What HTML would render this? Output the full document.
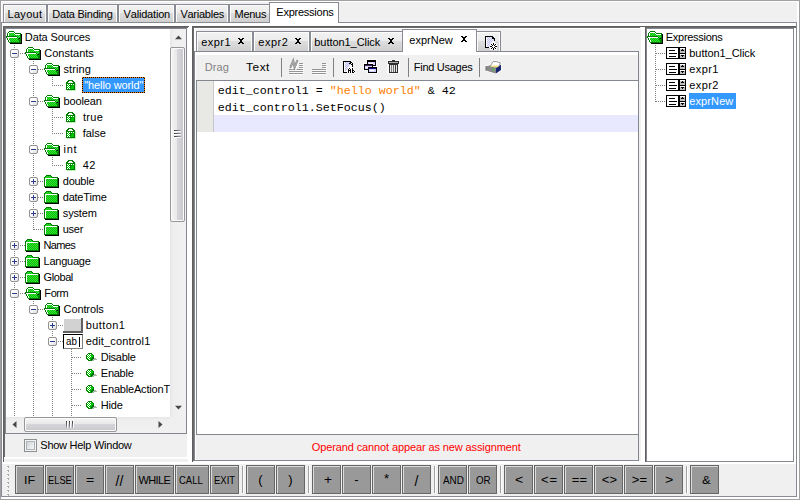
<!DOCTYPE html>
<html><head><meta charset="utf-8"><title>Expressions</title><style>
html,body{margin:0;padding:0}
body{width:800px;height:500px;overflow:hidden;background:#f0f0f0;position:relative;font-family:"Liberation Sans",sans-serif;font-size:11px;color:#000;font-kerning:none}
div{position:absolute;box-sizing:content-box}
.ic{position:absolute;display:block;overflow:visible}
.t{white-space:pre;line-height:13px;height:13px;font-size:11px}
.mono{font-family:"Liberation Mono",monospace;font-size:11.67px;white-space:pre;color:#000}
.bt{position:absolute;left:0;right:0;top:7px;text-align:center;line-height:13px;font-size:11px;white-space:pre}
</style></head><body>
<div style="left:0px;top:0px;width:800px;height:500px;box-sizing:border-box;border:1px solid #a0a0a0;background:#f0f0f0"></div><div style="left:1px;top:1px;width:798px;height:498px;box-sizing:border-box;border:1px solid #fff;border-bottom-width:2px;border-right-width:2px"></div><div style="left:1px;top:22px;width:796px;height:475px;box-sizing:border-box;border:1px solid #898c95;background:#fff"></div><div style="left:3px;top:4px;width:44px;height:18px;box-sizing:border-box;border:1px solid #898c95;border-bottom:0;background:linear-gradient(#f2f2f2 0%,#ebebeb 50%,#dddddd 50%,#cfcfcf 100%);box-shadow:inset 1px 1px 0 #fcfcfc,inset -1px 0 0 #fcfcfc"></div><div class="t" style="left:7.55px;top:8px;letter-spacing:0.294px;">Layout</div><div style="left:47px;top:4px;width:71px;height:18px;box-sizing:border-box;border:1px solid #898c95;border-bottom:0;background:linear-gradient(#f2f2f2 0%,#ebebeb 50%,#dddddd 50%,#cfcfcf 100%);box-shadow:inset 1px 1px 0 #fcfcfc,inset -1px 0 0 #fcfcfc"></div><div class="t" style="left:52.30px;top:8px;letter-spacing:-0.227px;">Data Binding</div><div style="left:118px;top:4px;width:57px;height:18px;box-sizing:border-box;border:1px solid #898c95;border-bottom:0;background:linear-gradient(#f2f2f2 0%,#ebebeb 50%,#dddddd 50%,#cfcfcf 100%);box-shadow:inset 1px 1px 0 #fcfcfc,inset -1px 0 0 #fcfcfc"></div><div class="t" style="left:123.55px;top:8px;letter-spacing:-0.186px;">Validation</div><div style="left:175px;top:4px;width:54px;height:18px;box-sizing:border-box;border:1px solid #898c95;border-bottom:0;background:linear-gradient(#f2f2f2 0%,#ebebeb 50%,#dddddd 50%,#cfcfcf 100%);box-shadow:inset 1px 1px 0 #fcfcfc,inset -1px 0 0 #fcfcfc"></div><div class="t" style="left:180.40px;top:8px;letter-spacing:-0.245px;">Variables</div><div style="left:229px;top:4px;width:42px;height:18px;box-sizing:border-box;border:1px solid #898c95;border-bottom:0;background:linear-gradient(#f2f2f2 0%,#ebebeb 50%,#dddddd 50%,#cfcfcf 100%);box-shadow:inset 1px 1px 0 #fcfcfc,inset -1px 0 0 #fcfcfc"></div><div class="t" style="left:234.55px;top:8px;letter-spacing:-0.295px;">Menus</div><div style="left:269px;top:2px;width:70px;height:21px;box-sizing:border-box;border:1px solid #898c95;border-bottom:0;background:#fff"></div><div class="t" style="left:276.30px;top:6px;letter-spacing:-0.242px;">Expressions</div><div style="left:3px;top:26px;width:186px;height:433px;background:#f0f0f0"></div><div style="left:5px;top:457px;width:184px;height:1px;background:#fff"></div><div style="left:4px;top:458px;width:185px;height:1px;background:#fff"></div><div style="left:187px;top:28px;width:1px;height:431px;background:#fff"></div><div style="left:188px;top:27px;width:1px;height:432px;background:#fff"></div><div style="left:3px;top:26px;width:186px;height:1px;background:#5f5f5f"></div><div style="left:3px;top:27px;width:185px;height:1px;background:#6b6b6b"></div><div style="left:3px;top:26px;width:1px;height:437px;background:#5f5f5f"></div><div style="left:4px;top:27px;width:1px;height:430px;background:#6b6b6b"></div><div style="left:4px;top:459px;width:184px;height:4px;background:#f0f0f0"></div><div style="left:5px;top:28px;width:182px;height:406px;box-sizing:border-box;border:1px solid #828790;background:#fff"></div><div style="left:6px;top:29px;width:164px;height:388px;overflow:hidden"><div style="left:-6px;top:-29px;width:200px;height:500px"><div style="left:14px;top:45px;width:1px;height:249px;background:repeating-linear-gradient(#808080 0,#808080 1px,transparent 1px,transparent 2px)"></div><div style="left:33px;top:61px;width:1px;height:169px;background:repeating-linear-gradient(#808080 0,#808080 1px,transparent 1px,transparent 2px)"></div><div style="left:52px;top:77px;width:1px;height:9px;background:repeating-linear-gradient(#808080 0,#808080 1px,transparent 1px,transparent 2px)"></div><div style="left:52px;top:109px;width:1px;height:25px;background:repeating-linear-gradient(#808080 0,#808080 1px,transparent 1px,transparent 2px)"></div><div style="left:52px;top:157px;width:1px;height:9px;background:repeating-linear-gradient(#808080 0,#808080 1px,transparent 1px,transparent 2px)"></div><div style="left:14px;top:301px;width:1px;height:120px;background:repeating-linear-gradient(#808080 0,#808080 1px,transparent 1px,transparent 2px)"></div><div style="left:33px;top:301px;width:1px;height:9px;background:repeating-linear-gradient(#808080 0,#808080 1px,transparent 1px,transparent 2px)"></div><div style="left:33px;top:317px;width:1px;height:104px;background:repeating-linear-gradient(#808080 0,#808080 1px,transparent 1px,transparent 2px)"></div><div style="left:52px;top:317px;width:1px;height:104px;background:repeating-linear-gradient(#808080 0,#808080 1px,transparent 1px,transparent 2px)"></div><div style="left:71px;top:349px;width:1px;height:72px;background:repeating-linear-gradient(#808080 0,#808080 1px,transparent 1px,transparent 2px)"></div><svg class="ic" style="left:6px;top:31px" width="16" height="13" viewBox="0 0 16 13" shape-rendering="crispEdges"><path fill="#007a00" d="M3 0h5v1h-5zM2 1h1v1h-1zM8 1h1v1h-1zM1 2h1v1h-1zM9 2h6v1h-6zM1 3h1v1h-1zM14 3h1v1h-1zM1 4h1v1h-1zM14 4h1v1h-1zM0 5h11v1h-11zM14 5h1v1h-1zM0 6h1v1h-1zM11 6h1v1h-1zM14 6h1v1h-1zM1 7h1v1h-1zM12 7h1v1h-1zM14 7h1v1h-1zM1 8h1v1h-1zM12 8h1v1h-1zM14 8h1v1h-1zM2 9h1v1h-1zM13 9h2v1h-2zM2 10h1v1h-1zM13 10h2v1h-2zM3 11h12v1h-12z"/><path fill="#ffffff" d="M3 1h5v1h-5zM2 2h1v1h-1zM8 2h1v1h-1zM2 3h1v1h-1zM9 3h5v1h-5zM2 4h1v1h-1zM1 6h10v1h-10zM2 7h1v1h-1zM2 8h1v1h-1zM3 9h1v1h-1zM3 10h1v1h-1z"/><path fill="#00c400" d="M3 2h1v1h-1zM5 2h1v1h-1zM7 2h1v1h-1zM4 3h1v1h-1zM6 3h1v1h-1zM8 3h1v1h-1zM3 4h1v1h-1zM5 4h1v1h-1zM7 4h1v1h-1zM9 4h1v1h-1zM11 4h1v1h-1zM13 4h1v1h-1zM12 5h1v1h-1zM13 6h1v1h-1zM4 7h1v1h-1zM6 7h1v1h-1zM8 7h1v1h-1zM10 7h1v1h-1zM3 8h1v1h-1zM5 8h1v1h-1zM7 8h1v1h-1zM9 8h1v1h-1zM11 8h1v1h-1zM13 8h1v1h-1zM4 9h1v1h-1zM6 9h1v1h-1zM8 9h1v1h-1zM10 9h1v1h-1zM12 9h1v1h-1zM5 10h1v1h-1zM7 10h1v1h-1zM9 10h1v1h-1zM11 10h1v1h-1z"/><path fill="#3ddc3d" d="M4 2h1v1h-1zM6 2h1v1h-1zM3 3h1v1h-1zM5 3h1v1h-1zM7 3h1v1h-1zM4 4h1v1h-1zM6 4h1v1h-1zM8 4h1v1h-1zM10 4h1v1h-1zM12 4h1v1h-1zM11 5h1v1h-1zM13 5h1v1h-1zM12 6h1v1h-1zM3 7h1v1h-1zM5 7h1v1h-1zM7 7h1v1h-1zM9 7h1v1h-1zM11 7h1v1h-1zM4 8h1v1h-1zM6 8h1v1h-1zM8 8h1v1h-1zM10 8h1v1h-1zM5 9h1v1h-1zM7 9h1v1h-1zM9 9h1v1h-1zM11 9h1v1h-1zM4 10h1v1h-1zM6 10h1v1h-1zM8 10h1v1h-1zM10 10h1v1h-1zM12 10h1v1h-1z"/><path fill="#000000" d="M15 3h1v1h-1zM15 4h1v1h-1zM15 5h1v1h-1zM15 6h1v1h-1zM13 7h1v1h-1zM15 7h1v1h-1zM15 8h1v1h-1zM15 9h1v1h-1zM15 10h1v1h-1zM15 11h1v1h-1zM4 12h12v1h-12z"/></svg><div class="t" style="left:24.80px;top:31px;letter-spacing:-0.105px;">Data Sources</div><div style="left:20px;top:53px;width:5px;height:1px;background:repeating-linear-gradient(90deg,#808080 0,#808080 1px,transparent 1px,transparent 2px)"></div><div style="left:10px;top:49px;width:9px;height:9px;box-sizing:border-box;border:1px solid #919191;border-radius:2px;background:linear-gradient(135deg,#fff 0%,#fff 40%,#dcdcdc 100%)"></div><div style="left:12px;top:53px;width:5px;height:1px;background:#2a3c8c"></div><svg class="ic" style="left:25px;top:47px" width="16" height="13" viewBox="0 0 16 13" shape-rendering="crispEdges"><path fill="#007a00" d="M3 0h5v1h-5zM2 1h1v1h-1zM8 1h1v1h-1zM1 2h1v1h-1zM9 2h6v1h-6zM1 3h1v1h-1zM14 3h1v1h-1zM1 4h1v1h-1zM14 4h1v1h-1zM0 5h11v1h-11zM14 5h1v1h-1zM0 6h1v1h-1zM11 6h1v1h-1zM14 6h1v1h-1zM1 7h1v1h-1zM12 7h1v1h-1zM14 7h1v1h-1zM1 8h1v1h-1zM12 8h1v1h-1zM14 8h1v1h-1zM2 9h1v1h-1zM13 9h2v1h-2zM2 10h1v1h-1zM13 10h2v1h-2zM3 11h12v1h-12z"/><path fill="#ffffff" d="M3 1h5v1h-5zM2 2h1v1h-1zM8 2h1v1h-1zM2 3h1v1h-1zM9 3h5v1h-5zM2 4h1v1h-1zM1 6h10v1h-10zM2 7h1v1h-1zM2 8h1v1h-1zM3 9h1v1h-1zM3 10h1v1h-1z"/><path fill="#00c400" d="M3 2h1v1h-1zM5 2h1v1h-1zM7 2h1v1h-1zM4 3h1v1h-1zM6 3h1v1h-1zM8 3h1v1h-1zM3 4h1v1h-1zM5 4h1v1h-1zM7 4h1v1h-1zM9 4h1v1h-1zM11 4h1v1h-1zM13 4h1v1h-1zM12 5h1v1h-1zM13 6h1v1h-1zM4 7h1v1h-1zM6 7h1v1h-1zM8 7h1v1h-1zM10 7h1v1h-1zM3 8h1v1h-1zM5 8h1v1h-1zM7 8h1v1h-1zM9 8h1v1h-1zM11 8h1v1h-1zM13 8h1v1h-1zM4 9h1v1h-1zM6 9h1v1h-1zM8 9h1v1h-1zM10 9h1v1h-1zM12 9h1v1h-1zM5 10h1v1h-1zM7 10h1v1h-1zM9 10h1v1h-1zM11 10h1v1h-1z"/><path fill="#3ddc3d" d="M4 2h1v1h-1zM6 2h1v1h-1zM3 3h1v1h-1zM5 3h1v1h-1zM7 3h1v1h-1zM4 4h1v1h-1zM6 4h1v1h-1zM8 4h1v1h-1zM10 4h1v1h-1zM12 4h1v1h-1zM11 5h1v1h-1zM13 5h1v1h-1zM12 6h1v1h-1zM3 7h1v1h-1zM5 7h1v1h-1zM7 7h1v1h-1zM9 7h1v1h-1zM11 7h1v1h-1zM4 8h1v1h-1zM6 8h1v1h-1zM8 8h1v1h-1zM10 8h1v1h-1zM5 9h1v1h-1zM7 9h1v1h-1zM9 9h1v1h-1zM11 9h1v1h-1zM4 10h1v1h-1zM6 10h1v1h-1zM8 10h1v1h-1zM10 10h1v1h-1zM12 10h1v1h-1z"/><path fill="#000000" d="M15 3h1v1h-1zM15 4h1v1h-1zM15 5h1v1h-1zM15 6h1v1h-1zM13 7h1v1h-1zM15 7h1v1h-1zM15 8h1v1h-1zM15 9h1v1h-1zM15 10h1v1h-1zM15 11h1v1h-1zM4 12h12v1h-12z"/></svg><div class="t" style="left:44.30px;top:47px;">Constants</div><div style="left:38px;top:69px;width:6px;height:1px;background:repeating-linear-gradient(90deg,#808080 0,#808080 1px,transparent 1px,transparent 2px)"></div><div style="left:29px;top:65px;width:9px;height:9px;box-sizing:border-box;border:1px solid #919191;border-radius:2px;background:linear-gradient(135deg,#fff 0%,#fff 40%,#dcdcdc 100%)"></div><div style="left:31px;top:69px;width:5px;height:1px;background:#2a3c8c"></div><svg class="ic" style="left:44px;top:63px" width="16" height="13" viewBox="0 0 16 13" shape-rendering="crispEdges"><path fill="#007a00" d="M3 0h5v1h-5zM2 1h1v1h-1zM8 1h1v1h-1zM1 2h1v1h-1zM9 2h6v1h-6zM1 3h1v1h-1zM14 3h1v1h-1zM1 4h1v1h-1zM14 4h1v1h-1zM0 5h11v1h-11zM14 5h1v1h-1zM0 6h1v1h-1zM11 6h1v1h-1zM14 6h1v1h-1zM1 7h1v1h-1zM12 7h1v1h-1zM14 7h1v1h-1zM1 8h1v1h-1zM12 8h1v1h-1zM14 8h1v1h-1zM2 9h1v1h-1zM13 9h2v1h-2zM2 10h1v1h-1zM13 10h2v1h-2zM3 11h12v1h-12z"/><path fill="#ffffff" d="M3 1h5v1h-5zM2 2h1v1h-1zM8 2h1v1h-1zM2 3h1v1h-1zM9 3h5v1h-5zM2 4h1v1h-1zM1 6h10v1h-10zM2 7h1v1h-1zM2 8h1v1h-1zM3 9h1v1h-1zM3 10h1v1h-1z"/><path fill="#00c400" d="M3 2h1v1h-1zM5 2h1v1h-1zM7 2h1v1h-1zM4 3h1v1h-1zM6 3h1v1h-1zM8 3h1v1h-1zM3 4h1v1h-1zM5 4h1v1h-1zM7 4h1v1h-1zM9 4h1v1h-1zM11 4h1v1h-1zM13 4h1v1h-1zM12 5h1v1h-1zM13 6h1v1h-1zM4 7h1v1h-1zM6 7h1v1h-1zM8 7h1v1h-1zM10 7h1v1h-1zM3 8h1v1h-1zM5 8h1v1h-1zM7 8h1v1h-1zM9 8h1v1h-1zM11 8h1v1h-1zM13 8h1v1h-1zM4 9h1v1h-1zM6 9h1v1h-1zM8 9h1v1h-1zM10 9h1v1h-1zM12 9h1v1h-1zM5 10h1v1h-1zM7 10h1v1h-1zM9 10h1v1h-1zM11 10h1v1h-1z"/><path fill="#3ddc3d" d="M4 2h1v1h-1zM6 2h1v1h-1zM3 3h1v1h-1zM5 3h1v1h-1zM7 3h1v1h-1zM4 4h1v1h-1zM6 4h1v1h-1zM8 4h1v1h-1zM10 4h1v1h-1zM12 4h1v1h-1zM11 5h1v1h-1zM13 5h1v1h-1zM12 6h1v1h-1zM3 7h1v1h-1zM5 7h1v1h-1zM7 7h1v1h-1zM9 7h1v1h-1zM11 7h1v1h-1zM4 8h1v1h-1zM6 8h1v1h-1zM8 8h1v1h-1zM10 8h1v1h-1zM5 9h1v1h-1zM7 9h1v1h-1zM9 9h1v1h-1zM11 9h1v1h-1zM4 10h1v1h-1zM6 10h1v1h-1zM8 10h1v1h-1zM10 10h1v1h-1zM12 10h1v1h-1z"/><path fill="#000000" d="M15 3h1v1h-1zM15 4h1v1h-1zM15 5h1v1h-1zM15 6h1v1h-1zM13 7h1v1h-1zM15 7h1v1h-1zM15 8h1v1h-1zM15 9h1v1h-1zM15 10h1v1h-1zM15 11h1v1h-1zM4 12h12v1h-12z"/></svg><div class="t" style="left:63.55px;top:63px;letter-spacing:0.069px;">string</div><div style="left:54px;top:85px;width:9px;height:1px;background:repeating-linear-gradient(90deg,#808080 0,#808080 1px,transparent 1px,transparent 2px)"></div><svg class="ic" style="left:66px;top:80px" width="10" height="11" viewBox="0 0 10 11" shape-rendering="crispEdges"><path fill="#007a00" d="M2 0h5v1h-5zM1 1h2v1h-2zM6 1h2v1h-2zM0 2h2v1h-2zM7 2h2v1h-2zM0 3h9v1h-9zM0 4h1v1h-1zM8 4h1v1h-1zM0 5h1v1h-1zM3 5h3v1h-3zM8 5h1v1h-1zM0 6h1v1h-1zM4 6h1v1h-1zM8 6h1v1h-1zM0 7h1v1h-1zM4 7h1v1h-1zM8 7h1v1h-1zM0 8h1v1h-1zM8 8h1v1h-1zM0 9h9v1h-9z"/><path fill="#ffffff" d="M3 1h3v1h-3zM2 2h5v1h-5zM1 4h1v1h-1zM3 4h1v1h-1zM5 4h1v1h-1zM7 4h1v1h-1zM2 5h1v1h-1zM1 6h1v1h-1zM3 6h1v1h-1zM2 7h1v1h-1zM1 8h1v1h-1zM3 8h1v1h-1z"/><path fill="#b8f0b8" d="M9 3h1v1h-1zM9 4h1v1h-1zM9 5h1v1h-1zM9 6h1v1h-1zM9 7h1v1h-1zM9 8h1v1h-1zM9 9h1v1h-1zM1 10h9v1h-9z"/><path fill="#00c400" d="M2 4h1v1h-1zM4 4h1v1h-1zM6 4h1v1h-1zM1 5h1v1h-1zM6 5h2v1h-2zM2 6h1v1h-1zM5 6h3v1h-3zM1 7h1v1h-1zM3 7h1v1h-1zM5 7h3v1h-3zM2 8h1v1h-1zM4 8h4v1h-4z"/></svg><div style="left:82px;top:77px;width:63px;height:16px;background:#3399ff"></div><div style="left:82px;top:77px;width:63px;height:16px;box-sizing:border-box;border:1px dotted #000;"></div><div style="left:82px;top:77px;width:63px;height:1px;background:repeating-linear-gradient(90deg,#ff8000 0,#ff8000 1px,#000 1px,#000 2px)"></div><div style="left:82px;top:92px;width:63px;height:1px;background:repeating-linear-gradient(90deg,#000 0,#000 1px,#ff8000 1px,#ff8000 2px)"></div><div style="left:82px;top:77px;width:1px;height:16px;background:repeating-linear-gradient(#ff8000 0,#ff8000 1px,#000 1px,#000 2px)"></div><div style="left:144px;top:77px;width:1px;height:16px;background:repeating-linear-gradient(#ff8000 0,#ff8000 1px,#000 1px,#000 2px)"></div><div class="t" style="left:84.30px;top:79px;letter-spacing:-0.117px;color:#fff">"hello world"</div><div style="left:38px;top:101px;width:6px;height:1px;background:repeating-linear-gradient(90deg,#808080 0,#808080 1px,transparent 1px,transparent 2px)"></div><div style="left:29px;top:97px;width:9px;height:9px;box-sizing:border-box;border:1px solid #919191;border-radius:2px;background:linear-gradient(135deg,#fff 0%,#fff 40%,#dcdcdc 100%)"></div><div style="left:31px;top:101px;width:5px;height:1px;background:#2a3c8c"></div><svg class="ic" style="left:44px;top:95px" width="16" height="13" viewBox="0 0 16 13" shape-rendering="crispEdges"><path fill="#007a00" d="M3 0h5v1h-5zM2 1h1v1h-1zM8 1h1v1h-1zM1 2h1v1h-1zM9 2h6v1h-6zM1 3h1v1h-1zM14 3h1v1h-1zM1 4h1v1h-1zM14 4h1v1h-1zM0 5h11v1h-11zM14 5h1v1h-1zM0 6h1v1h-1zM11 6h1v1h-1zM14 6h1v1h-1zM1 7h1v1h-1zM12 7h1v1h-1zM14 7h1v1h-1zM1 8h1v1h-1zM12 8h1v1h-1zM14 8h1v1h-1zM2 9h1v1h-1zM13 9h2v1h-2zM2 10h1v1h-1zM13 10h2v1h-2zM3 11h12v1h-12z"/><path fill="#ffffff" d="M3 1h5v1h-5zM2 2h1v1h-1zM8 2h1v1h-1zM2 3h1v1h-1zM9 3h5v1h-5zM2 4h1v1h-1zM1 6h10v1h-10zM2 7h1v1h-1zM2 8h1v1h-1zM3 9h1v1h-1zM3 10h1v1h-1z"/><path fill="#00c400" d="M3 2h1v1h-1zM5 2h1v1h-1zM7 2h1v1h-1zM4 3h1v1h-1zM6 3h1v1h-1zM8 3h1v1h-1zM3 4h1v1h-1zM5 4h1v1h-1zM7 4h1v1h-1zM9 4h1v1h-1zM11 4h1v1h-1zM13 4h1v1h-1zM12 5h1v1h-1zM13 6h1v1h-1zM4 7h1v1h-1zM6 7h1v1h-1zM8 7h1v1h-1zM10 7h1v1h-1zM3 8h1v1h-1zM5 8h1v1h-1zM7 8h1v1h-1zM9 8h1v1h-1zM11 8h1v1h-1zM13 8h1v1h-1zM4 9h1v1h-1zM6 9h1v1h-1zM8 9h1v1h-1zM10 9h1v1h-1zM12 9h1v1h-1zM5 10h1v1h-1zM7 10h1v1h-1zM9 10h1v1h-1zM11 10h1v1h-1z"/><path fill="#3ddc3d" d="M4 2h1v1h-1zM6 2h1v1h-1zM3 3h1v1h-1zM5 3h1v1h-1zM7 3h1v1h-1zM4 4h1v1h-1zM6 4h1v1h-1zM8 4h1v1h-1zM10 4h1v1h-1zM12 4h1v1h-1zM11 5h1v1h-1zM13 5h1v1h-1zM12 6h1v1h-1zM3 7h1v1h-1zM5 7h1v1h-1zM7 7h1v1h-1zM9 7h1v1h-1zM11 7h1v1h-1zM4 8h1v1h-1zM6 8h1v1h-1zM8 8h1v1h-1zM10 8h1v1h-1zM5 9h1v1h-1zM7 9h1v1h-1zM9 9h1v1h-1zM11 9h1v1h-1zM4 10h1v1h-1zM6 10h1v1h-1zM8 10h1v1h-1zM10 10h1v1h-1zM12 10h1v1h-1z"/><path fill="#000000" d="M15 3h1v1h-1zM15 4h1v1h-1zM15 5h1v1h-1zM15 6h1v1h-1zM13 7h1v1h-1zM15 7h1v1h-1zM15 8h1v1h-1zM15 9h1v1h-1zM15 10h1v1h-1zM15 11h1v1h-1zM4 12h12v1h-12z"/></svg><div class="t" style="left:63.55px;top:95px;letter-spacing:-0.151px;">boolean</div><div style="left:54px;top:117px;width:9px;height:1px;background:repeating-linear-gradient(90deg,#808080 0,#808080 1px,transparent 1px,transparent 2px)"></div><svg class="ic" style="left:66px;top:112px" width="10" height="11" viewBox="0 0 10 11" shape-rendering="crispEdges"><path fill="#007a00" d="M2 0h5v1h-5zM1 1h2v1h-2zM6 1h2v1h-2zM0 2h2v1h-2zM7 2h2v1h-2zM0 3h9v1h-9zM0 4h1v1h-1zM8 4h1v1h-1zM0 5h1v1h-1zM3 5h3v1h-3zM8 5h1v1h-1zM0 6h1v1h-1zM4 6h1v1h-1zM8 6h1v1h-1zM0 7h1v1h-1zM4 7h1v1h-1zM8 7h1v1h-1zM0 8h1v1h-1zM8 8h1v1h-1zM0 9h9v1h-9z"/><path fill="#ffffff" d="M3 1h3v1h-3zM2 2h5v1h-5zM1 4h1v1h-1zM3 4h1v1h-1zM5 4h1v1h-1zM7 4h1v1h-1zM2 5h1v1h-1zM1 6h1v1h-1zM3 6h1v1h-1zM2 7h1v1h-1zM1 8h1v1h-1zM3 8h1v1h-1z"/><path fill="#b8f0b8" d="M9 3h1v1h-1zM9 4h1v1h-1zM9 5h1v1h-1zM9 6h1v1h-1zM9 7h1v1h-1zM9 8h1v1h-1zM9 9h1v1h-1zM1 10h9v1h-9z"/><path fill="#00c400" d="M2 4h1v1h-1zM4 4h1v1h-1zM6 4h1v1h-1zM1 5h1v1h-1zM6 5h2v1h-2zM2 6h1v1h-1zM5 6h3v1h-3zM1 7h1v1h-1zM3 7h1v1h-1zM5 7h3v1h-3zM2 8h1v1h-1zM4 8h4v1h-4z"/></svg><div class="t" style="left:83.05px;top:111px;letter-spacing:0.260px;">true</div><div style="left:54px;top:133px;width:9px;height:1px;background:repeating-linear-gradient(90deg,#808080 0,#808080 1px,transparent 1px,transparent 2px)"></div><svg class="ic" style="left:66px;top:128px" width="10" height="11" viewBox="0 0 10 11" shape-rendering="crispEdges"><path fill="#007a00" d="M2 0h5v1h-5zM1 1h2v1h-2zM6 1h2v1h-2zM0 2h2v1h-2zM7 2h2v1h-2zM0 3h9v1h-9zM0 4h1v1h-1zM8 4h1v1h-1zM0 5h1v1h-1zM3 5h3v1h-3zM8 5h1v1h-1zM0 6h1v1h-1zM4 6h1v1h-1zM8 6h1v1h-1zM0 7h1v1h-1zM4 7h1v1h-1zM8 7h1v1h-1zM0 8h1v1h-1zM8 8h1v1h-1zM0 9h9v1h-9z"/><path fill="#ffffff" d="M3 1h3v1h-3zM2 2h5v1h-5zM1 4h1v1h-1zM3 4h1v1h-1zM5 4h1v1h-1zM7 4h1v1h-1zM2 5h1v1h-1zM1 6h1v1h-1zM3 6h1v1h-1zM2 7h1v1h-1zM1 8h1v1h-1zM3 8h1v1h-1z"/><path fill="#b8f0b8" d="M9 3h1v1h-1zM9 4h1v1h-1zM9 5h1v1h-1zM9 6h1v1h-1zM9 7h1v1h-1zM9 8h1v1h-1zM9 9h1v1h-1zM1 10h9v1h-9z"/><path fill="#00c400" d="M2 4h1v1h-1zM4 4h1v1h-1zM6 4h1v1h-1zM1 5h1v1h-1zM6 5h2v1h-2zM2 6h1v1h-1zM5 6h3v1h-3zM1 7h1v1h-1zM3 7h1v1h-1zM5 7h3v1h-3zM2 8h1v1h-1zM4 8h4v1h-4z"/></svg><div class="t" style="left:82.80px;top:127px;letter-spacing:-0.062px;">false</div><div style="left:38px;top:149px;width:6px;height:1px;background:repeating-linear-gradient(90deg,#808080 0,#808080 1px,transparent 1px,transparent 2px)"></div><div style="left:29px;top:145px;width:9px;height:9px;box-sizing:border-box;border:1px solid #919191;border-radius:2px;background:linear-gradient(135deg,#fff 0%,#fff 40%,#dcdcdc 100%)"></div><div style="left:31px;top:149px;width:5px;height:1px;background:#2a3c8c"></div><svg class="ic" style="left:44px;top:143px" width="16" height="13" viewBox="0 0 16 13" shape-rendering="crispEdges"><path fill="#007a00" d="M3 0h5v1h-5zM2 1h1v1h-1zM8 1h1v1h-1zM1 2h1v1h-1zM9 2h6v1h-6zM1 3h1v1h-1zM14 3h1v1h-1zM1 4h1v1h-1zM14 4h1v1h-1zM0 5h11v1h-11zM14 5h1v1h-1zM0 6h1v1h-1zM11 6h1v1h-1zM14 6h1v1h-1zM1 7h1v1h-1zM12 7h1v1h-1zM14 7h1v1h-1zM1 8h1v1h-1zM12 8h1v1h-1zM14 8h1v1h-1zM2 9h1v1h-1zM13 9h2v1h-2zM2 10h1v1h-1zM13 10h2v1h-2zM3 11h12v1h-12z"/><path fill="#ffffff" d="M3 1h5v1h-5zM2 2h1v1h-1zM8 2h1v1h-1zM2 3h1v1h-1zM9 3h5v1h-5zM2 4h1v1h-1zM1 6h10v1h-10zM2 7h1v1h-1zM2 8h1v1h-1zM3 9h1v1h-1zM3 10h1v1h-1z"/><path fill="#00c400" d="M3 2h1v1h-1zM5 2h1v1h-1zM7 2h1v1h-1zM4 3h1v1h-1zM6 3h1v1h-1zM8 3h1v1h-1zM3 4h1v1h-1zM5 4h1v1h-1zM7 4h1v1h-1zM9 4h1v1h-1zM11 4h1v1h-1zM13 4h1v1h-1zM12 5h1v1h-1zM13 6h1v1h-1zM4 7h1v1h-1zM6 7h1v1h-1zM8 7h1v1h-1zM10 7h1v1h-1zM3 8h1v1h-1zM5 8h1v1h-1zM7 8h1v1h-1zM9 8h1v1h-1zM11 8h1v1h-1zM13 8h1v1h-1zM4 9h1v1h-1zM6 9h1v1h-1zM8 9h1v1h-1zM10 9h1v1h-1zM12 9h1v1h-1zM5 10h1v1h-1zM7 10h1v1h-1zM9 10h1v1h-1zM11 10h1v1h-1z"/><path fill="#3ddc3d" d="M4 2h1v1h-1zM6 2h1v1h-1zM3 3h1v1h-1zM5 3h1v1h-1zM7 3h1v1h-1zM4 4h1v1h-1zM6 4h1v1h-1zM8 4h1v1h-1zM10 4h1v1h-1zM12 4h1v1h-1zM11 5h1v1h-1zM13 5h1v1h-1zM12 6h1v1h-1zM3 7h1v1h-1zM5 7h1v1h-1zM7 7h1v1h-1zM9 7h1v1h-1zM11 7h1v1h-1zM4 8h1v1h-1zM6 8h1v1h-1zM8 8h1v1h-1zM10 8h1v1h-1zM5 9h1v1h-1zM7 9h1v1h-1zM9 9h1v1h-1zM11 9h1v1h-1zM4 10h1v1h-1zM6 10h1v1h-1zM8 10h1v1h-1zM10 10h1v1h-1zM12 10h1v1h-1z"/><path fill="#000000" d="M15 3h1v1h-1zM15 4h1v1h-1zM15 5h1v1h-1zM15 6h1v1h-1zM13 7h1v1h-1zM15 7h1v1h-1zM15 8h1v1h-1zM15 9h1v1h-1zM15 10h1v1h-1zM15 11h1v1h-1zM4 12h12v1h-12z"/></svg><div class="t" style="left:63.55px;top:143px;letter-spacing:0.688px;">int</div><div style="left:54px;top:165px;width:9px;height:1px;background:repeating-linear-gradient(90deg,#808080 0,#808080 1px,transparent 1px,transparent 2px)"></div><svg class="ic" style="left:66px;top:160px" width="10" height="11" viewBox="0 0 10 11" shape-rendering="crispEdges"><path fill="#007a00" d="M2 0h5v1h-5zM1 1h2v1h-2zM6 1h2v1h-2zM0 2h2v1h-2zM7 2h2v1h-2zM0 3h9v1h-9zM0 4h1v1h-1zM8 4h1v1h-1zM0 5h1v1h-1zM3 5h3v1h-3zM8 5h1v1h-1zM0 6h1v1h-1zM4 6h1v1h-1zM8 6h1v1h-1zM0 7h1v1h-1zM4 7h1v1h-1zM8 7h1v1h-1zM0 8h1v1h-1zM8 8h1v1h-1zM0 9h9v1h-9z"/><path fill="#ffffff" d="M3 1h3v1h-3zM2 2h5v1h-5zM1 4h1v1h-1zM3 4h1v1h-1zM5 4h1v1h-1zM7 4h1v1h-1zM2 5h1v1h-1zM1 6h1v1h-1zM3 6h1v1h-1zM2 7h1v1h-1zM1 8h1v1h-1zM3 8h1v1h-1z"/><path fill="#b8f0b8" d="M9 3h1v1h-1zM9 4h1v1h-1zM9 5h1v1h-1zM9 6h1v1h-1zM9 7h1v1h-1zM9 8h1v1h-1zM9 9h1v1h-1zM1 10h9v1h-9z"/><path fill="#00c400" d="M2 4h1v1h-1zM4 4h1v1h-1zM6 4h1v1h-1zM1 5h1v1h-1zM6 5h2v1h-2zM2 6h1v1h-1zM5 6h3v1h-3zM1 7h1v1h-1zM3 7h1v1h-1zM5 7h3v1h-3zM2 8h1v1h-1zM4 8h4v1h-4z"/></svg><div class="t" style="left:82.80px;top:159px;letter-spacing:0.250px;">42</div><div style="left:38px;top:181px;width:6px;height:1px;background:repeating-linear-gradient(90deg,#808080 0,#808080 1px,transparent 1px,transparent 2px)"></div><div style="left:29px;top:177px;width:9px;height:9px;box-sizing:border-box;border:1px solid #919191;border-radius:2px;background:linear-gradient(135deg,#fff 0%,#fff 40%,#dcdcdc 100%)"></div><div style="left:31px;top:181px;width:5px;height:1px;background:#2a3c8c"></div><div style="left:33px;top:179px;width:1px;height:5px;background:#2a3c8c"></div><svg class="ic" style="left:44px;top:175px" width="15" height="13" viewBox="0 0 15 13" shape-rendering="crispEdges"><path fill="#007a00" d="M2 0h5v1h-5zM1 1h1v1h-1zM7 1h1v1h-1zM0 2h1v1h-1zM8 2h6v1h-6zM0 3h1v1h-1zM13 3h1v1h-1zM0 4h1v1h-1zM13 4h1v1h-1zM0 5h1v1h-1zM13 5h1v1h-1zM0 6h1v1h-1zM13 6h1v1h-1zM0 7h1v1h-1zM13 7h1v1h-1zM0 8h1v1h-1zM13 8h1v1h-1zM0 9h1v1h-1zM13 9h1v1h-1zM0 10h1v1h-1zM13 10h1v1h-1zM0 11h14v1h-14z"/><path fill="#00c400" d="M2 1h1v1h-1zM4 1h1v1h-1zM6 1h1v1h-1zM1 2h1v1h-1zM3 2h1v1h-1zM5 2h1v1h-1zM7 2h1v1h-1zM3 4h1v1h-1zM5 4h1v1h-1zM7 4h1v1h-1zM9 4h1v1h-1zM11 4h1v1h-1zM2 5h1v1h-1zM4 5h1v1h-1zM6 5h1v1h-1zM8 5h1v1h-1zM10 5h1v1h-1zM12 5h1v1h-1zM3 6h1v1h-1zM5 6h1v1h-1zM7 6h1v1h-1zM9 6h1v1h-1zM11 6h1v1h-1zM2 7h1v1h-1zM4 7h1v1h-1zM6 7h1v1h-1zM8 7h1v1h-1zM10 7h1v1h-1zM12 7h1v1h-1zM3 8h1v1h-1zM5 8h1v1h-1zM7 8h1v1h-1zM9 8h1v1h-1zM11 8h1v1h-1zM2 9h1v1h-1zM4 9h1v1h-1zM6 9h1v1h-1zM8 9h1v1h-1zM10 9h1v1h-1zM12 9h1v1h-1zM3 10h1v1h-1zM5 10h1v1h-1zM7 10h1v1h-1zM9 10h1v1h-1zM11 10h1v1h-1z"/><path fill="#3ddc3d" d="M3 1h1v1h-1zM5 1h1v1h-1zM2 2h1v1h-1zM4 2h1v1h-1zM6 2h1v1h-1zM2 4h1v1h-1zM4 4h1v1h-1zM6 4h1v1h-1zM8 4h1v1h-1zM10 4h1v1h-1zM12 4h1v1h-1zM3 5h1v1h-1zM5 5h1v1h-1zM7 5h1v1h-1zM9 5h1v1h-1zM11 5h1v1h-1zM2 6h1v1h-1zM4 6h1v1h-1zM6 6h1v1h-1zM8 6h1v1h-1zM10 6h1v1h-1zM12 6h1v1h-1zM3 7h1v1h-1zM5 7h1v1h-1zM7 7h1v1h-1zM9 7h1v1h-1zM11 7h1v1h-1zM2 8h1v1h-1zM4 8h1v1h-1zM6 8h1v1h-1zM8 8h1v1h-1zM10 8h1v1h-1zM12 8h1v1h-1zM3 9h1v1h-1zM5 9h1v1h-1zM7 9h1v1h-1zM9 9h1v1h-1zM11 9h1v1h-1zM2 10h1v1h-1zM4 10h1v1h-1zM6 10h1v1h-1zM8 10h1v1h-1zM10 10h1v1h-1zM12 10h1v1h-1z"/><path fill="#ffffff" d="M1 3h12v1h-12zM1 4h1v1h-1zM1 5h1v1h-1zM1 6h1v1h-1zM1 7h1v1h-1zM1 8h1v1h-1zM1 9h1v1h-1zM1 10h1v1h-1z"/><path fill="#000000" d="M14 3h1v1h-1zM14 4h1v1h-1zM14 5h1v1h-1zM14 6h1v1h-1zM14 7h1v1h-1zM14 8h1v1h-1zM14 9h1v1h-1zM14 10h1v1h-1zM14 11h1v1h-1zM1 12h14v1h-14z"/></svg><div class="t" style="left:62.80px;top:175px;letter-spacing:-0.259px;">double</div><div style="left:38px;top:197px;width:6px;height:1px;background:repeating-linear-gradient(90deg,#808080 0,#808080 1px,transparent 1px,transparent 2px)"></div><div style="left:29px;top:193px;width:9px;height:9px;box-sizing:border-box;border:1px solid #919191;border-radius:2px;background:linear-gradient(135deg,#fff 0%,#fff 40%,#dcdcdc 100%)"></div><div style="left:31px;top:197px;width:5px;height:1px;background:#2a3c8c"></div><div style="left:33px;top:195px;width:1px;height:5px;background:#2a3c8c"></div><svg class="ic" style="left:44px;top:191px" width="15" height="13" viewBox="0 0 15 13" shape-rendering="crispEdges"><path fill="#007a00" d="M2 0h5v1h-5zM1 1h1v1h-1zM7 1h1v1h-1zM0 2h1v1h-1zM8 2h6v1h-6zM0 3h1v1h-1zM13 3h1v1h-1zM0 4h1v1h-1zM13 4h1v1h-1zM0 5h1v1h-1zM13 5h1v1h-1zM0 6h1v1h-1zM13 6h1v1h-1zM0 7h1v1h-1zM13 7h1v1h-1zM0 8h1v1h-1zM13 8h1v1h-1zM0 9h1v1h-1zM13 9h1v1h-1zM0 10h1v1h-1zM13 10h1v1h-1zM0 11h14v1h-14z"/><path fill="#00c400" d="M2 1h1v1h-1zM4 1h1v1h-1zM6 1h1v1h-1zM1 2h1v1h-1zM3 2h1v1h-1zM5 2h1v1h-1zM7 2h1v1h-1zM3 4h1v1h-1zM5 4h1v1h-1zM7 4h1v1h-1zM9 4h1v1h-1zM11 4h1v1h-1zM2 5h1v1h-1zM4 5h1v1h-1zM6 5h1v1h-1zM8 5h1v1h-1zM10 5h1v1h-1zM12 5h1v1h-1zM3 6h1v1h-1zM5 6h1v1h-1zM7 6h1v1h-1zM9 6h1v1h-1zM11 6h1v1h-1zM2 7h1v1h-1zM4 7h1v1h-1zM6 7h1v1h-1zM8 7h1v1h-1zM10 7h1v1h-1zM12 7h1v1h-1zM3 8h1v1h-1zM5 8h1v1h-1zM7 8h1v1h-1zM9 8h1v1h-1zM11 8h1v1h-1zM2 9h1v1h-1zM4 9h1v1h-1zM6 9h1v1h-1zM8 9h1v1h-1zM10 9h1v1h-1zM12 9h1v1h-1zM3 10h1v1h-1zM5 10h1v1h-1zM7 10h1v1h-1zM9 10h1v1h-1zM11 10h1v1h-1z"/><path fill="#3ddc3d" d="M3 1h1v1h-1zM5 1h1v1h-1zM2 2h1v1h-1zM4 2h1v1h-1zM6 2h1v1h-1zM2 4h1v1h-1zM4 4h1v1h-1zM6 4h1v1h-1zM8 4h1v1h-1zM10 4h1v1h-1zM12 4h1v1h-1zM3 5h1v1h-1zM5 5h1v1h-1zM7 5h1v1h-1zM9 5h1v1h-1zM11 5h1v1h-1zM2 6h1v1h-1zM4 6h1v1h-1zM6 6h1v1h-1zM8 6h1v1h-1zM10 6h1v1h-1zM12 6h1v1h-1zM3 7h1v1h-1zM5 7h1v1h-1zM7 7h1v1h-1zM9 7h1v1h-1zM11 7h1v1h-1zM2 8h1v1h-1zM4 8h1v1h-1zM6 8h1v1h-1zM8 8h1v1h-1zM10 8h1v1h-1zM12 8h1v1h-1zM3 9h1v1h-1zM5 9h1v1h-1zM7 9h1v1h-1zM9 9h1v1h-1zM11 9h1v1h-1zM2 10h1v1h-1zM4 10h1v1h-1zM6 10h1v1h-1zM8 10h1v1h-1zM10 10h1v1h-1zM12 10h1v1h-1z"/><path fill="#ffffff" d="M1 3h12v1h-12zM1 4h1v1h-1zM1 5h1v1h-1zM1 6h1v1h-1zM1 7h1v1h-1zM1 8h1v1h-1zM1 9h1v1h-1zM1 10h1v1h-1z"/><path fill="#000000" d="M14 3h1v1h-1zM14 4h1v1h-1zM14 5h1v1h-1zM14 6h1v1h-1zM14 7h1v1h-1zM14 8h1v1h-1zM14 9h1v1h-1zM14 10h1v1h-1zM14 11h1v1h-1zM1 12h14v1h-14z"/></svg><div class="t" style="left:62.80px;top:191px;letter-spacing:-0.266px;">dateTime</div><div style="left:38px;top:213px;width:6px;height:1px;background:repeating-linear-gradient(90deg,#808080 0,#808080 1px,transparent 1px,transparent 2px)"></div><div style="left:29px;top:209px;width:9px;height:9px;box-sizing:border-box;border:1px solid #919191;border-radius:2px;background:linear-gradient(135deg,#fff 0%,#fff 40%,#dcdcdc 100%)"></div><div style="left:31px;top:213px;width:5px;height:1px;background:#2a3c8c"></div><div style="left:33px;top:211px;width:1px;height:5px;background:#2a3c8c"></div><svg class="ic" style="left:44px;top:207px" width="15" height="13" viewBox="0 0 15 13" shape-rendering="crispEdges"><path fill="#007a00" d="M2 0h5v1h-5zM1 1h1v1h-1zM7 1h1v1h-1zM0 2h1v1h-1zM8 2h6v1h-6zM0 3h1v1h-1zM13 3h1v1h-1zM0 4h1v1h-1zM13 4h1v1h-1zM0 5h1v1h-1zM13 5h1v1h-1zM0 6h1v1h-1zM13 6h1v1h-1zM0 7h1v1h-1zM13 7h1v1h-1zM0 8h1v1h-1zM13 8h1v1h-1zM0 9h1v1h-1zM13 9h1v1h-1zM0 10h1v1h-1zM13 10h1v1h-1zM0 11h14v1h-14z"/><path fill="#00c400" d="M2 1h1v1h-1zM4 1h1v1h-1zM6 1h1v1h-1zM1 2h1v1h-1zM3 2h1v1h-1zM5 2h1v1h-1zM7 2h1v1h-1zM3 4h1v1h-1zM5 4h1v1h-1zM7 4h1v1h-1zM9 4h1v1h-1zM11 4h1v1h-1zM2 5h1v1h-1zM4 5h1v1h-1zM6 5h1v1h-1zM8 5h1v1h-1zM10 5h1v1h-1zM12 5h1v1h-1zM3 6h1v1h-1zM5 6h1v1h-1zM7 6h1v1h-1zM9 6h1v1h-1zM11 6h1v1h-1zM2 7h1v1h-1zM4 7h1v1h-1zM6 7h1v1h-1zM8 7h1v1h-1zM10 7h1v1h-1zM12 7h1v1h-1zM3 8h1v1h-1zM5 8h1v1h-1zM7 8h1v1h-1zM9 8h1v1h-1zM11 8h1v1h-1zM2 9h1v1h-1zM4 9h1v1h-1zM6 9h1v1h-1zM8 9h1v1h-1zM10 9h1v1h-1zM12 9h1v1h-1zM3 10h1v1h-1zM5 10h1v1h-1zM7 10h1v1h-1zM9 10h1v1h-1zM11 10h1v1h-1z"/><path fill="#3ddc3d" d="M3 1h1v1h-1zM5 1h1v1h-1zM2 2h1v1h-1zM4 2h1v1h-1zM6 2h1v1h-1zM2 4h1v1h-1zM4 4h1v1h-1zM6 4h1v1h-1zM8 4h1v1h-1zM10 4h1v1h-1zM12 4h1v1h-1zM3 5h1v1h-1zM5 5h1v1h-1zM7 5h1v1h-1zM9 5h1v1h-1zM11 5h1v1h-1zM2 6h1v1h-1zM4 6h1v1h-1zM6 6h1v1h-1zM8 6h1v1h-1zM10 6h1v1h-1zM12 6h1v1h-1zM3 7h1v1h-1zM5 7h1v1h-1zM7 7h1v1h-1zM9 7h1v1h-1zM11 7h1v1h-1zM2 8h1v1h-1zM4 8h1v1h-1zM6 8h1v1h-1zM8 8h1v1h-1zM10 8h1v1h-1zM12 8h1v1h-1zM3 9h1v1h-1zM5 9h1v1h-1zM7 9h1v1h-1zM9 9h1v1h-1zM11 9h1v1h-1zM2 10h1v1h-1zM4 10h1v1h-1zM6 10h1v1h-1zM8 10h1v1h-1zM10 10h1v1h-1zM12 10h1v1h-1z"/><path fill="#ffffff" d="M1 3h12v1h-12zM1 4h1v1h-1zM1 5h1v1h-1zM1 6h1v1h-1zM1 7h1v1h-1zM1 8h1v1h-1zM1 9h1v1h-1zM1 10h1v1h-1z"/><path fill="#000000" d="M14 3h1v1h-1zM14 4h1v1h-1zM14 5h1v1h-1zM14 6h1v1h-1zM14 7h1v1h-1zM14 8h1v1h-1zM14 9h1v1h-1zM14 10h1v1h-1zM14 11h1v1h-1zM1 12h14v1h-14z"/></svg><div class="t" style="left:62.80px;top:207px;letter-spacing:-0.169px;">system</div><div style="left:34px;top:229px;width:10px;height:1px;background:repeating-linear-gradient(90deg,#808080 0,#808080 1px,transparent 1px,transparent 2px)"></div><svg class="ic" style="left:44px;top:223px" width="15" height="13" viewBox="0 0 15 13" shape-rendering="crispEdges"><path fill="#007a00" d="M2 0h5v1h-5zM1 1h1v1h-1zM7 1h1v1h-1zM0 2h1v1h-1zM8 2h6v1h-6zM0 3h1v1h-1zM13 3h1v1h-1zM0 4h1v1h-1zM13 4h1v1h-1zM0 5h1v1h-1zM13 5h1v1h-1zM0 6h1v1h-1zM13 6h1v1h-1zM0 7h1v1h-1zM13 7h1v1h-1zM0 8h1v1h-1zM13 8h1v1h-1zM0 9h1v1h-1zM13 9h1v1h-1zM0 10h1v1h-1zM13 10h1v1h-1zM0 11h14v1h-14z"/><path fill="#00c400" d="M2 1h1v1h-1zM4 1h1v1h-1zM6 1h1v1h-1zM1 2h1v1h-1zM3 2h1v1h-1zM5 2h1v1h-1zM7 2h1v1h-1zM3 4h1v1h-1zM5 4h1v1h-1zM7 4h1v1h-1zM9 4h1v1h-1zM11 4h1v1h-1zM2 5h1v1h-1zM4 5h1v1h-1zM6 5h1v1h-1zM8 5h1v1h-1zM10 5h1v1h-1zM12 5h1v1h-1zM3 6h1v1h-1zM5 6h1v1h-1zM7 6h1v1h-1zM9 6h1v1h-1zM11 6h1v1h-1zM2 7h1v1h-1zM4 7h1v1h-1zM6 7h1v1h-1zM8 7h1v1h-1zM10 7h1v1h-1zM12 7h1v1h-1zM3 8h1v1h-1zM5 8h1v1h-1zM7 8h1v1h-1zM9 8h1v1h-1zM11 8h1v1h-1zM2 9h1v1h-1zM4 9h1v1h-1zM6 9h1v1h-1zM8 9h1v1h-1zM10 9h1v1h-1zM12 9h1v1h-1zM3 10h1v1h-1zM5 10h1v1h-1zM7 10h1v1h-1zM9 10h1v1h-1zM11 10h1v1h-1z"/><path fill="#3ddc3d" d="M3 1h1v1h-1zM5 1h1v1h-1zM2 2h1v1h-1zM4 2h1v1h-1zM6 2h1v1h-1zM2 4h1v1h-1zM4 4h1v1h-1zM6 4h1v1h-1zM8 4h1v1h-1zM10 4h1v1h-1zM12 4h1v1h-1zM3 5h1v1h-1zM5 5h1v1h-1zM7 5h1v1h-1zM9 5h1v1h-1zM11 5h1v1h-1zM2 6h1v1h-1zM4 6h1v1h-1zM6 6h1v1h-1zM8 6h1v1h-1zM10 6h1v1h-1zM12 6h1v1h-1zM3 7h1v1h-1zM5 7h1v1h-1zM7 7h1v1h-1zM9 7h1v1h-1zM11 7h1v1h-1zM2 8h1v1h-1zM4 8h1v1h-1zM6 8h1v1h-1zM8 8h1v1h-1zM10 8h1v1h-1zM12 8h1v1h-1zM3 9h1v1h-1zM5 9h1v1h-1zM7 9h1v1h-1zM9 9h1v1h-1zM11 9h1v1h-1zM2 10h1v1h-1zM4 10h1v1h-1zM6 10h1v1h-1zM8 10h1v1h-1zM10 10h1v1h-1zM12 10h1v1h-1z"/><path fill="#ffffff" d="M1 3h12v1h-12zM1 4h1v1h-1zM1 5h1v1h-1zM1 6h1v1h-1zM1 7h1v1h-1zM1 8h1v1h-1zM1 9h1v1h-1zM1 10h1v1h-1z"/><path fill="#000000" d="M14 3h1v1h-1zM14 4h1v1h-1zM14 5h1v1h-1zM14 6h1v1h-1zM14 7h1v1h-1zM14 8h1v1h-1zM14 9h1v1h-1zM14 10h1v1h-1zM14 11h1v1h-1zM1 12h14v1h-14z"/></svg><div class="t" style="left:62.80px;top:223px;letter-spacing:-0.302px;">user</div><div style="left:20px;top:245px;width:5px;height:1px;background:repeating-linear-gradient(90deg,#808080 0,#808080 1px,transparent 1px,transparent 2px)"></div><div style="left:10px;top:241px;width:9px;height:9px;box-sizing:border-box;border:1px solid #919191;border-radius:2px;background:linear-gradient(135deg,#fff 0%,#fff 40%,#dcdcdc 100%)"></div><div style="left:12px;top:245px;width:5px;height:1px;background:#2a3c8c"></div><div style="left:14px;top:243px;width:1px;height:5px;background:#2a3c8c"></div><svg class="ic" style="left:25px;top:239px" width="15" height="13" viewBox="0 0 15 13" shape-rendering="crispEdges"><path fill="#007a00" d="M2 0h5v1h-5zM1 1h1v1h-1zM7 1h1v1h-1zM0 2h1v1h-1zM8 2h6v1h-6zM0 3h1v1h-1zM13 3h1v1h-1zM0 4h1v1h-1zM13 4h1v1h-1zM0 5h1v1h-1zM13 5h1v1h-1zM0 6h1v1h-1zM13 6h1v1h-1zM0 7h1v1h-1zM13 7h1v1h-1zM0 8h1v1h-1zM13 8h1v1h-1zM0 9h1v1h-1zM13 9h1v1h-1zM0 10h1v1h-1zM13 10h1v1h-1zM0 11h14v1h-14z"/><path fill="#00c400" d="M2 1h1v1h-1zM4 1h1v1h-1zM6 1h1v1h-1zM1 2h1v1h-1zM3 2h1v1h-1zM5 2h1v1h-1zM7 2h1v1h-1zM3 4h1v1h-1zM5 4h1v1h-1zM7 4h1v1h-1zM9 4h1v1h-1zM11 4h1v1h-1zM2 5h1v1h-1zM4 5h1v1h-1zM6 5h1v1h-1zM8 5h1v1h-1zM10 5h1v1h-1zM12 5h1v1h-1zM3 6h1v1h-1zM5 6h1v1h-1zM7 6h1v1h-1zM9 6h1v1h-1zM11 6h1v1h-1zM2 7h1v1h-1zM4 7h1v1h-1zM6 7h1v1h-1zM8 7h1v1h-1zM10 7h1v1h-1zM12 7h1v1h-1zM3 8h1v1h-1zM5 8h1v1h-1zM7 8h1v1h-1zM9 8h1v1h-1zM11 8h1v1h-1zM2 9h1v1h-1zM4 9h1v1h-1zM6 9h1v1h-1zM8 9h1v1h-1zM10 9h1v1h-1zM12 9h1v1h-1zM3 10h1v1h-1zM5 10h1v1h-1zM7 10h1v1h-1zM9 10h1v1h-1zM11 10h1v1h-1z"/><path fill="#3ddc3d" d="M3 1h1v1h-1zM5 1h1v1h-1zM2 2h1v1h-1zM4 2h1v1h-1zM6 2h1v1h-1zM2 4h1v1h-1zM4 4h1v1h-1zM6 4h1v1h-1zM8 4h1v1h-1zM10 4h1v1h-1zM12 4h1v1h-1zM3 5h1v1h-1zM5 5h1v1h-1zM7 5h1v1h-1zM9 5h1v1h-1zM11 5h1v1h-1zM2 6h1v1h-1zM4 6h1v1h-1zM6 6h1v1h-1zM8 6h1v1h-1zM10 6h1v1h-1zM12 6h1v1h-1zM3 7h1v1h-1zM5 7h1v1h-1zM7 7h1v1h-1zM9 7h1v1h-1zM11 7h1v1h-1zM2 8h1v1h-1zM4 8h1v1h-1zM6 8h1v1h-1zM8 8h1v1h-1zM10 8h1v1h-1zM12 8h1v1h-1zM3 9h1v1h-1zM5 9h1v1h-1zM7 9h1v1h-1zM9 9h1v1h-1zM11 9h1v1h-1zM2 10h1v1h-1zM4 10h1v1h-1zM6 10h1v1h-1zM8 10h1v1h-1zM10 10h1v1h-1zM12 10h1v1h-1z"/><path fill="#ffffff" d="M1 3h12v1h-12zM1 4h1v1h-1zM1 5h1v1h-1zM1 6h1v1h-1zM1 7h1v1h-1zM1 8h1v1h-1zM1 9h1v1h-1zM1 10h1v1h-1z"/><path fill="#000000" d="M14 3h1v1h-1zM14 4h1v1h-1zM14 5h1v1h-1zM14 6h1v1h-1zM14 7h1v1h-1zM14 8h1v1h-1zM14 9h1v1h-1zM14 10h1v1h-1zM14 11h1v1h-1zM1 12h14v1h-14z"/></svg><div class="t" style="left:43.55px;top:239px;letter-spacing:-0.648px;">Names</div><div style="left:20px;top:261px;width:5px;height:1px;background:repeating-linear-gradient(90deg,#808080 0,#808080 1px,transparent 1px,transparent 2px)"></div><div style="left:10px;top:257px;width:9px;height:9px;box-sizing:border-box;border:1px solid #919191;border-radius:2px;background:linear-gradient(135deg,#fff 0%,#fff 40%,#dcdcdc 100%)"></div><div style="left:12px;top:261px;width:5px;height:1px;background:#2a3c8c"></div><div style="left:14px;top:259px;width:1px;height:5px;background:#2a3c8c"></div><svg class="ic" style="left:25px;top:255px" width="15" height="13" viewBox="0 0 15 13" shape-rendering="crispEdges"><path fill="#007a00" d="M2 0h5v1h-5zM1 1h1v1h-1zM7 1h1v1h-1zM0 2h1v1h-1zM8 2h6v1h-6zM0 3h1v1h-1zM13 3h1v1h-1zM0 4h1v1h-1zM13 4h1v1h-1zM0 5h1v1h-1zM13 5h1v1h-1zM0 6h1v1h-1zM13 6h1v1h-1zM0 7h1v1h-1zM13 7h1v1h-1zM0 8h1v1h-1zM13 8h1v1h-1zM0 9h1v1h-1zM13 9h1v1h-1zM0 10h1v1h-1zM13 10h1v1h-1zM0 11h14v1h-14z"/><path fill="#00c400" d="M2 1h1v1h-1zM4 1h1v1h-1zM6 1h1v1h-1zM1 2h1v1h-1zM3 2h1v1h-1zM5 2h1v1h-1zM7 2h1v1h-1zM3 4h1v1h-1zM5 4h1v1h-1zM7 4h1v1h-1zM9 4h1v1h-1zM11 4h1v1h-1zM2 5h1v1h-1zM4 5h1v1h-1zM6 5h1v1h-1zM8 5h1v1h-1zM10 5h1v1h-1zM12 5h1v1h-1zM3 6h1v1h-1zM5 6h1v1h-1zM7 6h1v1h-1zM9 6h1v1h-1zM11 6h1v1h-1zM2 7h1v1h-1zM4 7h1v1h-1zM6 7h1v1h-1zM8 7h1v1h-1zM10 7h1v1h-1zM12 7h1v1h-1zM3 8h1v1h-1zM5 8h1v1h-1zM7 8h1v1h-1zM9 8h1v1h-1zM11 8h1v1h-1zM2 9h1v1h-1zM4 9h1v1h-1zM6 9h1v1h-1zM8 9h1v1h-1zM10 9h1v1h-1zM12 9h1v1h-1zM3 10h1v1h-1zM5 10h1v1h-1zM7 10h1v1h-1zM9 10h1v1h-1zM11 10h1v1h-1z"/><path fill="#3ddc3d" d="M3 1h1v1h-1zM5 1h1v1h-1zM2 2h1v1h-1zM4 2h1v1h-1zM6 2h1v1h-1zM2 4h1v1h-1zM4 4h1v1h-1zM6 4h1v1h-1zM8 4h1v1h-1zM10 4h1v1h-1zM12 4h1v1h-1zM3 5h1v1h-1zM5 5h1v1h-1zM7 5h1v1h-1zM9 5h1v1h-1zM11 5h1v1h-1zM2 6h1v1h-1zM4 6h1v1h-1zM6 6h1v1h-1zM8 6h1v1h-1zM10 6h1v1h-1zM12 6h1v1h-1zM3 7h1v1h-1zM5 7h1v1h-1zM7 7h1v1h-1zM9 7h1v1h-1zM11 7h1v1h-1zM2 8h1v1h-1zM4 8h1v1h-1zM6 8h1v1h-1zM8 8h1v1h-1zM10 8h1v1h-1zM12 8h1v1h-1zM3 9h1v1h-1zM5 9h1v1h-1zM7 9h1v1h-1zM9 9h1v1h-1zM11 9h1v1h-1zM2 10h1v1h-1zM4 10h1v1h-1zM6 10h1v1h-1zM8 10h1v1h-1zM10 10h1v1h-1zM12 10h1v1h-1z"/><path fill="#ffffff" d="M1 3h12v1h-12zM1 4h1v1h-1zM1 5h1v1h-1zM1 6h1v1h-1zM1 7h1v1h-1zM1 8h1v1h-1zM1 9h1v1h-1zM1 10h1v1h-1z"/><path fill="#000000" d="M14 3h1v1h-1zM14 4h1v1h-1zM14 5h1v1h-1zM14 6h1v1h-1zM14 7h1v1h-1zM14 8h1v1h-1zM14 9h1v1h-1zM14 10h1v1h-1zM14 11h1v1h-1zM1 12h14v1h-14z"/></svg><div class="t" style="left:43.55px;top:255px;letter-spacing:-0.243px;">Language</div><div style="left:20px;top:277px;width:5px;height:1px;background:repeating-linear-gradient(90deg,#808080 0,#808080 1px,transparent 1px,transparent 2px)"></div><div style="left:10px;top:273px;width:9px;height:9px;box-sizing:border-box;border:1px solid #919191;border-radius:2px;background:linear-gradient(135deg,#fff 0%,#fff 40%,#dcdcdc 100%)"></div><div style="left:12px;top:277px;width:5px;height:1px;background:#2a3c8c"></div><div style="left:14px;top:275px;width:1px;height:5px;background:#2a3c8c"></div><svg class="ic" style="left:25px;top:271px" width="15" height="13" viewBox="0 0 15 13" shape-rendering="crispEdges"><path fill="#007a00" d="M2 0h5v1h-5zM1 1h1v1h-1zM7 1h1v1h-1zM0 2h1v1h-1zM8 2h6v1h-6zM0 3h1v1h-1zM13 3h1v1h-1zM0 4h1v1h-1zM13 4h1v1h-1zM0 5h1v1h-1zM13 5h1v1h-1zM0 6h1v1h-1zM13 6h1v1h-1zM0 7h1v1h-1zM13 7h1v1h-1zM0 8h1v1h-1zM13 8h1v1h-1zM0 9h1v1h-1zM13 9h1v1h-1zM0 10h1v1h-1zM13 10h1v1h-1zM0 11h14v1h-14z"/><path fill="#00c400" d="M2 1h1v1h-1zM4 1h1v1h-1zM6 1h1v1h-1zM1 2h1v1h-1zM3 2h1v1h-1zM5 2h1v1h-1zM7 2h1v1h-1zM3 4h1v1h-1zM5 4h1v1h-1zM7 4h1v1h-1zM9 4h1v1h-1zM11 4h1v1h-1zM2 5h1v1h-1zM4 5h1v1h-1zM6 5h1v1h-1zM8 5h1v1h-1zM10 5h1v1h-1zM12 5h1v1h-1zM3 6h1v1h-1zM5 6h1v1h-1zM7 6h1v1h-1zM9 6h1v1h-1zM11 6h1v1h-1zM2 7h1v1h-1zM4 7h1v1h-1zM6 7h1v1h-1zM8 7h1v1h-1zM10 7h1v1h-1zM12 7h1v1h-1zM3 8h1v1h-1zM5 8h1v1h-1zM7 8h1v1h-1zM9 8h1v1h-1zM11 8h1v1h-1zM2 9h1v1h-1zM4 9h1v1h-1zM6 9h1v1h-1zM8 9h1v1h-1zM10 9h1v1h-1zM12 9h1v1h-1zM3 10h1v1h-1zM5 10h1v1h-1zM7 10h1v1h-1zM9 10h1v1h-1zM11 10h1v1h-1z"/><path fill="#3ddc3d" d="M3 1h1v1h-1zM5 1h1v1h-1zM2 2h1v1h-1zM4 2h1v1h-1zM6 2h1v1h-1zM2 4h1v1h-1zM4 4h1v1h-1zM6 4h1v1h-1zM8 4h1v1h-1zM10 4h1v1h-1zM12 4h1v1h-1zM3 5h1v1h-1zM5 5h1v1h-1zM7 5h1v1h-1zM9 5h1v1h-1zM11 5h1v1h-1zM2 6h1v1h-1zM4 6h1v1h-1zM6 6h1v1h-1zM8 6h1v1h-1zM10 6h1v1h-1zM12 6h1v1h-1zM3 7h1v1h-1zM5 7h1v1h-1zM7 7h1v1h-1zM9 7h1v1h-1zM11 7h1v1h-1zM2 8h1v1h-1zM4 8h1v1h-1zM6 8h1v1h-1zM8 8h1v1h-1zM10 8h1v1h-1zM12 8h1v1h-1zM3 9h1v1h-1zM5 9h1v1h-1zM7 9h1v1h-1zM9 9h1v1h-1zM11 9h1v1h-1zM2 10h1v1h-1zM4 10h1v1h-1zM6 10h1v1h-1zM8 10h1v1h-1zM10 10h1v1h-1zM12 10h1v1h-1z"/><path fill="#ffffff" d="M1 3h12v1h-12zM1 4h1v1h-1zM1 5h1v1h-1zM1 6h1v1h-1zM1 7h1v1h-1zM1 8h1v1h-1zM1 9h1v1h-1zM1 10h1v1h-1z"/><path fill="#000000" d="M14 3h1v1h-1zM14 4h1v1h-1zM14 5h1v1h-1zM14 6h1v1h-1zM14 7h1v1h-1zM14 8h1v1h-1zM14 9h1v1h-1zM14 10h1v1h-1zM14 11h1v1h-1zM1 12h14v1h-14z"/></svg><div class="t" style="left:43.55px;top:271px;letter-spacing:-0.409px;">Global</div><div style="left:20px;top:293px;width:5px;height:1px;background:repeating-linear-gradient(90deg,#808080 0,#808080 1px,transparent 1px,transparent 2px)"></div><div style="left:10px;top:289px;width:9px;height:9px;box-sizing:border-box;border:1px solid #919191;border-radius:2px;background:linear-gradient(135deg,#fff 0%,#fff 40%,#dcdcdc 100%)"></div><div style="left:12px;top:293px;width:5px;height:1px;background:#2a3c8c"></div><svg class="ic" style="left:25px;top:287px" width="16" height="13" viewBox="0 0 16 13" shape-rendering="crispEdges"><path fill="#007a00" d="M3 0h5v1h-5zM2 1h1v1h-1zM8 1h1v1h-1zM1 2h1v1h-1zM9 2h6v1h-6zM1 3h1v1h-1zM14 3h1v1h-1zM1 4h1v1h-1zM14 4h1v1h-1zM0 5h11v1h-11zM14 5h1v1h-1zM0 6h1v1h-1zM11 6h1v1h-1zM14 6h1v1h-1zM1 7h1v1h-1zM12 7h1v1h-1zM14 7h1v1h-1zM1 8h1v1h-1zM12 8h1v1h-1zM14 8h1v1h-1zM2 9h1v1h-1zM13 9h2v1h-2zM2 10h1v1h-1zM13 10h2v1h-2zM3 11h12v1h-12z"/><path fill="#ffffff" d="M3 1h5v1h-5zM2 2h1v1h-1zM8 2h1v1h-1zM2 3h1v1h-1zM9 3h5v1h-5zM2 4h1v1h-1zM1 6h10v1h-10zM2 7h1v1h-1zM2 8h1v1h-1zM3 9h1v1h-1zM3 10h1v1h-1z"/><path fill="#00c400" d="M3 2h1v1h-1zM5 2h1v1h-1zM7 2h1v1h-1zM4 3h1v1h-1zM6 3h1v1h-1zM8 3h1v1h-1zM3 4h1v1h-1zM5 4h1v1h-1zM7 4h1v1h-1zM9 4h1v1h-1zM11 4h1v1h-1zM13 4h1v1h-1zM12 5h1v1h-1zM13 6h1v1h-1zM4 7h1v1h-1zM6 7h1v1h-1zM8 7h1v1h-1zM10 7h1v1h-1zM3 8h1v1h-1zM5 8h1v1h-1zM7 8h1v1h-1zM9 8h1v1h-1zM11 8h1v1h-1zM13 8h1v1h-1zM4 9h1v1h-1zM6 9h1v1h-1zM8 9h1v1h-1zM10 9h1v1h-1zM12 9h1v1h-1zM5 10h1v1h-1zM7 10h1v1h-1zM9 10h1v1h-1zM11 10h1v1h-1z"/><path fill="#3ddc3d" d="M4 2h1v1h-1zM6 2h1v1h-1zM3 3h1v1h-1zM5 3h1v1h-1zM7 3h1v1h-1zM4 4h1v1h-1zM6 4h1v1h-1zM8 4h1v1h-1zM10 4h1v1h-1zM12 4h1v1h-1zM11 5h1v1h-1zM13 5h1v1h-1zM12 6h1v1h-1zM3 7h1v1h-1zM5 7h1v1h-1zM7 7h1v1h-1zM9 7h1v1h-1zM11 7h1v1h-1zM4 8h1v1h-1zM6 8h1v1h-1zM8 8h1v1h-1zM10 8h1v1h-1zM5 9h1v1h-1zM7 9h1v1h-1zM9 9h1v1h-1zM11 9h1v1h-1zM4 10h1v1h-1zM6 10h1v1h-1zM8 10h1v1h-1zM10 10h1v1h-1zM12 10h1v1h-1z"/><path fill="#000000" d="M15 3h1v1h-1zM15 4h1v1h-1zM15 5h1v1h-1zM15 6h1v1h-1zM13 7h1v1h-1zM15 7h1v1h-1zM15 8h1v1h-1zM15 9h1v1h-1zM15 10h1v1h-1zM15 11h1v1h-1zM4 12h12v1h-12z"/></svg><div class="t" style="left:44.30px;top:287px;letter-spacing:-0.391px;">Form</div><div style="left:38px;top:309px;width:6px;height:1px;background:repeating-linear-gradient(90deg,#808080 0,#808080 1px,transparent 1px,transparent 2px)"></div><div style="left:29px;top:305px;width:9px;height:9px;box-sizing:border-box;border:1px solid #919191;border-radius:2px;background:linear-gradient(135deg,#fff 0%,#fff 40%,#dcdcdc 100%)"></div><div style="left:31px;top:309px;width:5px;height:1px;background:#2a3c8c"></div><svg class="ic" style="left:44px;top:303px" width="16" height="13" viewBox="0 0 16 13" shape-rendering="crispEdges"><path fill="#007a00" d="M3 0h5v1h-5zM2 1h1v1h-1zM8 1h1v1h-1zM1 2h1v1h-1zM9 2h6v1h-6zM1 3h1v1h-1zM14 3h1v1h-1zM1 4h1v1h-1zM14 4h1v1h-1zM0 5h11v1h-11zM14 5h1v1h-1zM0 6h1v1h-1zM11 6h1v1h-1zM14 6h1v1h-1zM1 7h1v1h-1zM12 7h1v1h-1zM14 7h1v1h-1zM1 8h1v1h-1zM12 8h1v1h-1zM14 8h1v1h-1zM2 9h1v1h-1zM13 9h2v1h-2zM2 10h1v1h-1zM13 10h2v1h-2zM3 11h12v1h-12z"/><path fill="#ffffff" d="M3 1h5v1h-5zM2 2h1v1h-1zM8 2h1v1h-1zM2 3h1v1h-1zM9 3h5v1h-5zM2 4h1v1h-1zM1 6h10v1h-10zM2 7h1v1h-1zM2 8h1v1h-1zM3 9h1v1h-1zM3 10h1v1h-1z"/><path fill="#00c400" d="M3 2h1v1h-1zM5 2h1v1h-1zM7 2h1v1h-1zM4 3h1v1h-1zM6 3h1v1h-1zM8 3h1v1h-1zM3 4h1v1h-1zM5 4h1v1h-1zM7 4h1v1h-1zM9 4h1v1h-1zM11 4h1v1h-1zM13 4h1v1h-1zM12 5h1v1h-1zM13 6h1v1h-1zM4 7h1v1h-1zM6 7h1v1h-1zM8 7h1v1h-1zM10 7h1v1h-1zM3 8h1v1h-1zM5 8h1v1h-1zM7 8h1v1h-1zM9 8h1v1h-1zM11 8h1v1h-1zM13 8h1v1h-1zM4 9h1v1h-1zM6 9h1v1h-1zM8 9h1v1h-1zM10 9h1v1h-1zM12 9h1v1h-1zM5 10h1v1h-1zM7 10h1v1h-1zM9 10h1v1h-1zM11 10h1v1h-1z"/><path fill="#3ddc3d" d="M4 2h1v1h-1zM6 2h1v1h-1zM3 3h1v1h-1zM5 3h1v1h-1zM7 3h1v1h-1zM4 4h1v1h-1zM6 4h1v1h-1zM8 4h1v1h-1zM10 4h1v1h-1zM12 4h1v1h-1zM11 5h1v1h-1zM13 5h1v1h-1zM12 6h1v1h-1zM3 7h1v1h-1zM5 7h1v1h-1zM7 7h1v1h-1zM9 7h1v1h-1zM11 7h1v1h-1zM4 8h1v1h-1zM6 8h1v1h-1zM8 8h1v1h-1zM10 8h1v1h-1zM5 9h1v1h-1zM7 9h1v1h-1zM9 9h1v1h-1zM11 9h1v1h-1zM4 10h1v1h-1zM6 10h1v1h-1zM8 10h1v1h-1zM10 10h1v1h-1zM12 10h1v1h-1z"/><path fill="#000000" d="M15 3h1v1h-1zM15 4h1v1h-1zM15 5h1v1h-1zM15 6h1v1h-1zM13 7h1v1h-1zM15 7h1v1h-1zM15 8h1v1h-1zM15 9h1v1h-1zM15 10h1v1h-1zM15 11h1v1h-1zM4 12h12v1h-12z"/></svg><div class="t" style="left:63.55px;top:303px;letter-spacing:-0.103px;">Controls</div><div style="left:58px;top:325px;width:5px;height:1px;background:repeating-linear-gradient(90deg,#808080 0,#808080 1px,transparent 1px,transparent 2px)"></div><div style="left:48px;top:321px;width:9px;height:9px;box-sizing:border-box;border:1px solid #919191;border-radius:2px;background:linear-gradient(135deg,#fff 0%,#fff 40%,#dcdcdc 100%)"></div><div style="left:50px;top:325px;width:5px;height:1px;background:#2a3c8c"></div><div style="left:52px;top:323px;width:1px;height:5px;background:#2a3c8c"></div><div style="left:63px;top:318px;width:20px;height:15px;background:#606060"></div><div style="left:63px;top:318px;width:18px;height:13px;background:#fff"></div><div style="left:64px;top:319px;width:17px;height:12px;background:#d2d2d2"></div><div class="t" style="left:85.80px;top:319px;letter-spacing:0.383px;">button1</div><div style="left:58px;top:341px;width:5px;height:1px;background:repeating-linear-gradient(90deg,#808080 0,#808080 1px,transparent 1px,transparent 2px)"></div><div style="left:48px;top:337px;width:9px;height:9px;box-sizing:border-box;border:1px solid #919191;border-radius:2px;background:linear-gradient(135deg,#fff 0%,#fff 40%,#dcdcdc 100%)"></div><div style="left:50px;top:341px;width:5px;height:1px;background:#2a3c8c"></div><div style="left:63px;top:334px;width:20px;height:15px;box-sizing:border-box;border:1px solid #000;border-right-color:#808080;border-bottom-color:#808080;background:#fff"></div><div class="t" style="left:66.32px;top:335px;transform:scaleX(0.8889);transform-origin:0 0;color:#000">ab</div><div style="left:79px;top:337px;width:1px;height:10px;background:#000"></div><div class="t" style="left:85.80px;top:335px;letter-spacing:0.125px;">edit_control1</div><div style="left:72px;top:357px;width:10px;height:1px;background:repeating-linear-gradient(90deg,#808080 0,#808080 1px,transparent 1px,transparent 2px)"></div><svg class="ic" style="left:86px;top:353px" width="11" height="8" viewBox="0 0 11 8" shape-rendering="crispEdges"><path fill="#007a00" d="M2 0h4v1h-4zM1 1h1v1h-1zM6 1h1v1h-1zM0 2h1v1h-1zM7 2h1v1h-1zM0 3h1v1h-1zM7 3h1v1h-1zM0 4h1v1h-1zM6 4h2v1h-2zM0 5h1v1h-1zM5 5h3v1h-3zM1 6h1v1h-1zM5 6h2v1h-2zM2 7h4v1h-4z"/><path fill="#ffffff" d="M2 1h1v1h-1zM4 1h1v1h-1zM1 2h1v1h-1zM3 2h1v1h-1zM2 3h1v1h-1zM4 3h1v1h-1zM1 4h1v1h-1zM3 4h1v1h-1zM2 5h1v1h-1zM3 6h1v1h-1z"/><path fill="#00c400" d="M3 1h1v1h-1zM5 1h1v1h-1zM2 2h1v1h-1zM4 2h3v1h-3zM1 3h1v1h-1zM3 3h1v1h-1zM5 3h2v1h-2zM2 4h1v1h-1zM4 4h2v1h-2zM1 5h1v1h-1zM3 5h2v1h-2zM2 6h1v1h-1zM4 6h1v1h-1z"/><path fill="#a8b8a8" d="M8 5h2v1h-2zM7 6h4v1h-4zM6 7h2v1h-2z"/></svg><div class="t" style="left:100.80px;top:351px;letter-spacing:-0.281px;">Disable</div><div style="left:72px;top:373px;width:10px;height:1px;background:repeating-linear-gradient(90deg,#808080 0,#808080 1px,transparent 1px,transparent 2px)"></div><svg class="ic" style="left:86px;top:369px" width="11" height="8" viewBox="0 0 11 8" shape-rendering="crispEdges"><path fill="#007a00" d="M2 0h4v1h-4zM1 1h1v1h-1zM6 1h1v1h-1zM0 2h1v1h-1zM7 2h1v1h-1zM0 3h1v1h-1zM7 3h1v1h-1zM0 4h1v1h-1zM6 4h2v1h-2zM0 5h1v1h-1zM5 5h3v1h-3zM1 6h1v1h-1zM5 6h2v1h-2zM2 7h4v1h-4z"/><path fill="#ffffff" d="M2 1h1v1h-1zM4 1h1v1h-1zM1 2h1v1h-1zM3 2h1v1h-1zM2 3h1v1h-1zM4 3h1v1h-1zM1 4h1v1h-1zM3 4h1v1h-1zM2 5h1v1h-1zM3 6h1v1h-1z"/><path fill="#00c400" d="M3 1h1v1h-1zM5 1h1v1h-1zM2 2h1v1h-1zM4 2h3v1h-3zM1 3h1v1h-1zM3 3h1v1h-1zM5 3h2v1h-2zM2 4h1v1h-1zM4 4h2v1h-2zM1 5h1v1h-1zM3 5h2v1h-2zM2 6h1v1h-1zM4 6h1v1h-1z"/><path fill="#a8b8a8" d="M8 5h2v1h-2zM7 6h4v1h-4zM6 7h2v1h-2z"/></svg><div class="t" style="left:100.80px;top:367px;letter-spacing:-0.253px;">Enable</div><div style="left:72px;top:389px;width:10px;height:1px;background:repeating-linear-gradient(90deg,#808080 0,#808080 1px,transparent 1px,transparent 2px)"></div><svg class="ic" style="left:86px;top:385px" width="11" height="8" viewBox="0 0 11 8" shape-rendering="crispEdges"><path fill="#007a00" d="M2 0h4v1h-4zM1 1h1v1h-1zM6 1h1v1h-1zM0 2h1v1h-1zM7 2h1v1h-1zM0 3h1v1h-1zM7 3h1v1h-1zM0 4h1v1h-1zM6 4h2v1h-2zM0 5h1v1h-1zM5 5h3v1h-3zM1 6h1v1h-1zM5 6h2v1h-2zM2 7h4v1h-4z"/><path fill="#ffffff" d="M2 1h1v1h-1zM4 1h1v1h-1zM1 2h1v1h-1zM3 2h1v1h-1zM2 3h1v1h-1zM4 3h1v1h-1zM1 4h1v1h-1zM3 4h1v1h-1zM2 5h1v1h-1zM3 6h1v1h-1z"/><path fill="#00c400" d="M3 1h1v1h-1zM5 1h1v1h-1zM2 2h1v1h-1zM4 2h3v1h-3zM1 3h1v1h-1zM3 3h1v1h-1zM5 3h2v1h-2zM2 4h1v1h-1zM4 4h2v1h-2zM1 5h1v1h-1zM3 5h2v1h-2zM2 6h1v1h-1zM4 6h1v1h-1z"/><path fill="#a8b8a8" d="M8 5h2v1h-2zM7 6h4v1h-4zM6 7h2v1h-2z"/></svg><div class="t" style="left:100.80px;top:383px;letter-spacing:-0.187px;">EnableActionT</div><div style="left:72px;top:405px;width:10px;height:1px;background:repeating-linear-gradient(90deg,#808080 0,#808080 1px,transparent 1px,transparent 2px)"></div><svg class="ic" style="left:86px;top:401px" width="11" height="8" viewBox="0 0 11 8" shape-rendering="crispEdges"><path fill="#007a00" d="M2 0h4v1h-4zM1 1h1v1h-1zM6 1h1v1h-1zM0 2h1v1h-1zM7 2h1v1h-1zM0 3h1v1h-1zM7 3h1v1h-1zM0 4h1v1h-1zM6 4h2v1h-2zM0 5h1v1h-1zM5 5h3v1h-3zM1 6h1v1h-1zM5 6h2v1h-2zM2 7h4v1h-4z"/><path fill="#ffffff" d="M2 1h1v1h-1zM4 1h1v1h-1zM1 2h1v1h-1zM3 2h1v1h-1zM2 3h1v1h-1zM4 3h1v1h-1zM1 4h1v1h-1zM3 4h1v1h-1zM2 5h1v1h-1zM3 6h1v1h-1z"/><path fill="#00c400" d="M3 1h1v1h-1zM5 1h1v1h-1zM2 2h1v1h-1zM4 2h3v1h-3zM1 3h1v1h-1zM3 3h1v1h-1zM5 3h2v1h-2zM2 4h1v1h-1zM4 4h2v1h-2zM1 5h1v1h-1zM3 5h2v1h-2zM2 6h1v1h-1zM4 6h1v1h-1z"/><path fill="#a8b8a8" d="M8 5h2v1h-2zM7 6h4v1h-4zM6 7h2v1h-2z"/></svg><div class="t" style="left:100.80px;top:399px;letter-spacing:-0.208px;">Hide</div><div style="left:72px;top:421px;width:10px;height:1px;background:repeating-linear-gradient(90deg,#808080 0,#808080 1px,transparent 1px,transparent 2px)"></div><svg class="ic" style="left:86px;top:417px" width="11" height="8" viewBox="0 0 11 8" shape-rendering="crispEdges"><path fill="#007a00" d="M2 0h4v1h-4zM1 1h1v1h-1zM6 1h1v1h-1zM0 2h1v1h-1zM7 2h1v1h-1zM0 3h1v1h-1zM7 3h1v1h-1zM0 4h1v1h-1zM6 4h2v1h-2zM0 5h1v1h-1zM5 5h3v1h-3zM1 6h1v1h-1zM5 6h2v1h-2zM2 7h4v1h-4z"/><path fill="#ffffff" d="M2 1h1v1h-1zM4 1h1v1h-1zM1 2h1v1h-1zM3 2h1v1h-1zM2 3h1v1h-1zM4 3h1v1h-1zM1 4h1v1h-1zM3 4h1v1h-1zM2 5h1v1h-1zM3 6h1v1h-1z"/><path fill="#00c400" d="M3 1h1v1h-1zM5 1h1v1h-1zM2 2h1v1h-1zM4 2h3v1h-3zM1 3h1v1h-1zM3 3h1v1h-1zM5 3h2v1h-2zM2 4h1v1h-1zM4 4h2v1h-2zM1 5h1v1h-1zM3 5h2v1h-2zM2 6h1v1h-1zM4 6h1v1h-1z"/><path fill="#a8b8a8" d="M8 5h2v1h-2zM7 6h4v1h-4zM6 7h2v1h-2z"/></svg><div class="t" style="left:100.80px;top:415px;">Show</div></div></div><div style="left:170px;top:29px;width:16px;height:388px;background:linear-gradient(90deg,#e6e6e6,#efefef 20%,#f1f1f1)"></div><svg class="ic" style="left:175px;top:35px" width="7" height="5" viewBox="0 0 7 5"><path fill="#484848" d="M0 4.3L3.5 0.5L7 4.3z"/></svg><svg class="ic" style="left:175px;top:405px" width="7" height="5" viewBox="0 0 7 5"><path fill="#484848" d="M0 0.7L3.5 4.5L7 0.7z"/></svg><div style="left:170px;top:47px;width:15px;height:175px;box-sizing:border-box;border:1px solid #979797;border-radius:2px;background:linear-gradient(90deg,#f6f6f6 0%,#e8e8e8 45%,#d6d6da 50%,#c8c8cc 100%);box-shadow:inset 0 0 0 1px #fbfbfb"></div><div style="left:174px;top:130px;width:7px;height:1px;background:linear-gradient(90deg,#36363e,#a4a4ac)"></div><div style="left:174px;top:131px;width:7px;height:1px;background:#fff"></div><div style="left:174px;top:133px;width:7px;height:1px;background:linear-gradient(90deg,#36363e,#a4a4ac)"></div><div style="left:174px;top:134px;width:7px;height:1px;background:#fff"></div><div style="left:174px;top:136px;width:7px;height:1px;background:linear-gradient(90deg,#36363e,#a4a4ac)"></div><div style="left:174px;top:137px;width:7px;height:1px;background:#fff"></div><div style="left:6px;top:417px;width:164px;height:16px;background:linear-gradient(#e6e6e6,#efefef 20%,#f1f1f1)"></div><div style="left:170px;top:417px;width:16px;height:16px;background:#f0f0f0"></div><svg class="ic" style="left:12px;top:421px" width="5" height="7" viewBox="0 0 5 7"><path fill="#484848" d="M4.5 0L0.5 3.5L4.5 7z"/></svg><svg class="ic" style="left:158px;top:421px" width="5" height="7" viewBox="0 0 5 7"><path fill="#484848" d="M0.5 0L4.5 3.5L0.5 7z"/></svg><div style="left:24px;top:417px;width:93px;height:15px;box-sizing:border-box;border:1px solid #979797;border-radius:2px;background:linear-gradient(#f6f6f6 0%,#e8e8e8 45%,#d6d6da 50%,#c8c8cc 100%);box-shadow:inset 0 0 0 1px #fbfbfb"></div><div style="left:66px;top:421px;width:1px;height:7px;background:linear-gradient(#36363e,#a4a4ac)"></div><div style="left:67px;top:421px;width:1px;height:7px;background:#fff"></div><div style="left:69px;top:421px;width:1px;height:7px;background:linear-gradient(#36363e,#a4a4ac)"></div><div style="left:70px;top:421px;width:1px;height:7px;background:#fff"></div><div style="left:72px;top:421px;width:1px;height:7px;background:linear-gradient(#36363e,#a4a4ac)"></div><div style="left:73px;top:421px;width:1px;height:7px;background:#fff"></div><div style="left:24px;top:439px;width:13px;height:13px;box-sizing:border-box;border:1px solid #8e8f8f;background:#f4f4f4"></div><div style="left:26px;top:441px;width:9px;height:9px;box-sizing:border-box;border:1px solid #aeb3b9;background:linear-gradient(135deg,#d2d6da,#f6f6f6)"></div><div class="t" style="left:40.30px;top:439px;letter-spacing:-0.258px;">Show Help Window</div><div style="left:192px;top:26px;width:449px;height:437px;background:#f0f0f0"></div><div style="left:192px;top:26px;width:449px;height:1px;background:#5f5f5f"></div><div style="left:192px;top:27px;width:448px;height:1px;background:#6b6b6b"></div><div style="left:192px;top:26px;width:1px;height:436px;background:#5f5f5f"></div><div style="left:193px;top:27px;width:1px;height:434px;background:#6b6b6b"></div><div style="left:194px;top:28px;width:447px;height:1px;background:#fff"></div><div style="left:194px;top:28px;width:2px;height:23px;background:#fff"></div><div style="left:193px;top:462px;width:448px;height:1px;background:#fff"></div><div style="left:194px;top:461px;width:447px;height:1px;background:#fff"></div><div style="left:641px;top:26px;width:4px;height:437px;background:#fff"></div><div style="left:641px;top:26px;width:4px;height:1px;background:#5f5f5f"></div><div style="left:194px;top:51px;width:445px;height:410px;box-sizing:border-box;border:1px solid #828790;background:#fff"></div><div style="left:196px;top:31px;width:57px;height:20px;box-sizing:border-box;border:1px solid #898c95;border-bottom:0;background:linear-gradient(#f2f2f2 0%,#ebebeb 50%,#dddddd 50%,#cfcfcf 100%);box-shadow:inset 1px 1px 0 #fcfcfc,inset -1px 0 0 #fcfcfc"></div><div class="t" style="left:201.30px;top:36px;letter-spacing:0.430px;">expr1</div><svg class="ic" style="left:238px;top:38px" width="6" height="6" viewBox="0 0 6 6" shape-rendering="crispEdges"><path fill="#000" d="M0 0h2v1h-2zM4 0h2v1h-2zM1 1h4v1h-4zM2 2h2v1h-2zM2 3h2v1h-2zM1 4h4v1h-4zM0 5h2v1h-2zM4 5h2v1h-2z"/></svg><div style="left:253px;top:31px;width:57px;height:20px;box-sizing:border-box;border:1px solid #898c95;border-bottom:0;background:linear-gradient(#f2f2f2 0%,#ebebeb 50%,#dddddd 50%,#cfcfcf 100%);box-shadow:inset 1px 1px 0 #fcfcfc,inset -1px 0 0 #fcfcfc"></div><div class="t" style="left:258.30px;top:36px;letter-spacing:0.492px;">expr2</div><svg class="ic" style="left:295px;top:38px" width="6" height="6" viewBox="0 0 6 6" shape-rendering="crispEdges"><path fill="#000" d="M0 0h2v1h-2zM4 0h2v1h-2zM1 1h4v1h-4zM2 2h2v1h-2zM2 3h2v1h-2zM1 4h4v1h-4zM0 5h2v1h-2zM4 5h2v1h-2z"/></svg><div style="left:310px;top:31px;width:94px;height:20px;box-sizing:border-box;border:1px solid #898c95;border-bottom:0;background:linear-gradient(#f2f2f2 0%,#ebebeb 50%,#dddddd 50%,#cfcfcf 100%);box-shadow:inset 1px 1px 0 #fcfcfc,inset -1px 0 0 #fcfcfc"></div><div class="t" style="left:314.30px;top:36px;letter-spacing:-0.055px;">button1_Click</div><svg class="ic" style="left:388px;top:38px" width="6" height="6" viewBox="0 0 6 6" shape-rendering="crispEdges"><path fill="#000" d="M0 0h2v1h-2zM4 0h2v1h-2zM1 1h4v1h-4zM2 2h2v1h-2zM2 3h2v1h-2zM1 4h4v1h-4zM0 5h2v1h-2zM4 5h2v1h-2z"/></svg><div style="left:476px;top:31px;width:25px;height:20px;box-sizing:border-box;border:1px solid #898c95;border-bottom:0;background:linear-gradient(#f2f2f2 0%,#ebebeb 50%,#dddddd 50%,#cfcfcf 100%);box-shadow:inset 1px 1px 0 #fcfcfc,inset -1px 0 0 #fcfcfc"></div><div style="left:402px;top:29px;width:75px;height:23px;box-sizing:border-box;border:1px solid #898c95;border-bottom:0;background:#fff"></div><div class="t" style="left:409.30px;top:34px;letter-spacing:0.016px;">exprNew</div><svg class="ic" style="left:461px;top:36px" width="6" height="6" viewBox="0 0 6 6" shape-rendering="crispEdges"><path fill="#000" d="M0 0h2v1h-2zM4 0h2v1h-2zM1 1h4v1h-4zM2 2h2v1h-2zM2 3h2v1h-2zM1 4h4v1h-4zM0 5h2v1h-2zM4 5h2v1h-2z"/></svg><svg class="ic" style="left:485px;top:36px" width="12" height="14" viewBox="0 0 12 14" shape-rendering="crispEdges"><path fill="#000" d="M0 0h8v1h-8zM0 1h1v1h-1zM7 1h2v1h-2zM0 2h1v1h-1zM7 2h3v1h-3zM0 3h1v1h-1zM9 3h1v1h-1zM0 4h1v1h-1zM9 4h1v1h-1zM0 5h1v1h-1zM0 6h1v1h-1zM0 7h1v1h-1zM8 7h1v1h-1zM0 8h1v1h-1zM6 8h1v1h-1zM8 8h1v1h-1zM10 8h1v1h-1zM0 9h1v1h-1zM7 9h1v1h-1zM9 9h1v1h-1zM0 10h1v1h-1zM5 10h2v1h-2zM10 10h2v1h-2zM0 11h4v1h-4zM7 11h1v1h-1zM9 11h1v1h-1zM6 12h1v1h-1zM8 12h1v1h-1zM10 12h1v1h-1zM8 13h1v1h-1z"/><path fill="#fff" d="M1 1h1v1h-1zM1 2h1v1h-1zM1 3h1v1h-1zM1 4h1v1h-1zM1 5h1v1h-1zM8 5h1v1h-1zM1 6h1v1h-1zM7 6h3v1h-3zM1 7h1v1h-1zM6 7h2v1h-2zM9 7h2v1h-2zM1 8h1v1h-1zM5 8h1v1h-1zM7 8h1v1h-1zM9 8h1v1h-1zM11 8h1v1h-1zM1 9h1v1h-1zM5 9h2v1h-2zM8 9h1v1h-1zM10 9h2v1h-2zM1 10h1v1h-1zM7 10h3v1h-3zM4 11h3v1h-3zM8 11h1v1h-1zM10 11h2v1h-2zM5 12h1v1h-1zM7 12h1v1h-1zM9 12h1v1h-1zM11 12h1v1h-1zM5 13h3v1h-3zM9 13h3v1h-3z"/><path fill="#c4c4ee" d="M2 1h1v1h-1zM4 1h1v1h-1zM6 1h1v1h-1zM3 2h1v1h-1zM5 2h1v1h-1zM2 3h1v1h-1zM4 3h1v1h-1zM6 3h1v1h-1zM8 3h1v1h-1zM3 4h1v1h-1zM5 4h1v1h-1zM7 4h1v1h-1zM2 5h1v1h-1zM4 5h1v1h-1zM6 5h1v1h-1zM3 6h1v1h-1zM5 6h1v1h-1zM2 7h1v1h-1zM4 7h1v1h-1zM3 8h1v1h-1zM2 9h1v1h-1zM4 9h1v1h-1zM3 10h1v1h-1z"/><path fill="#ececff" d="M3 1h1v1h-1zM5 1h1v1h-1zM2 2h1v1h-1zM4 2h1v1h-1zM6 2h1v1h-1zM3 3h1v1h-1zM5 3h1v1h-1zM7 3h1v1h-1zM2 4h1v1h-1zM4 4h1v1h-1zM6 4h1v1h-1zM8 4h1v1h-1zM3 5h1v1h-1zM5 5h1v1h-1zM7 5h1v1h-1zM2 6h1v1h-1zM4 6h1v1h-1zM6 6h1v1h-1zM3 7h1v1h-1zM5 7h1v1h-1zM2 8h1v1h-1zM4 8h1v1h-1zM3 9h1v1h-1zM2 10h1v1h-1zM4 10h1v1h-1z"/></svg><div style="left:196px;top:55px;width:442px;height:25px;background:#f0f0f0"></div><div style="left:196px;top:80px;width:442px;height:1px;background:#828790"></div><div class="t" style="left:204.80px;top:61px;letter-spacing:0.052px;color:#838383">Drag</div><div class="t" style="left:245.7px;top:61px;font-kerning:normal;letter-spacing:0.5px;transform:scaleX(1.08);transform-origin:0 0">Text</div><div style="left:281px;top:58px;width:1px;height:19px;background:#808080"></div><div style="left:333px;top:58px;width:1px;height:19px;background:#808080"></div><div style="left:408px;top:58px;width:1px;height:19px;background:#808080"></div><div style="left:479px;top:58px;width:1px;height:19px;background:#808080"></div><div class="t" style="left:413.80px;top:61px;letter-spacing:-0.277px;">Find Usages</div><svg class="ic" style="left:289px;top:60px" width="15" height="15" viewBox="0 0 15 15" shape-rendering="crispEdges"><rect x="11" y="4" width="4" height="1" fill="#fbfbfb"/><rect x="10" y="3" width="4" height="1" fill="#949494"/><rect x="11" y="6" width="4" height="1" fill="#fbfbfb"/><rect x="10" y="5" width="4" height="1" fill="#949494"/><rect x="11" y="8" width="4" height="1" fill="#fbfbfb"/><rect x="10" y="7" width="4" height="1" fill="#949494"/><rect x="1" y="10" width="14" height="1" fill="#fbfbfb"/><rect x="0" y="9" width="14" height="1" fill="#949494"/><rect x="1" y="12" width="14" height="1" fill="#fbfbfb"/><rect x="0" y="11" width="14" height="1" fill="#949494"/><rect x="1" y="14" width="14" height="1" fill="#fbfbfb"/><rect x="0" y="13" width="14" height="1" fill="#949494"/><g shape-rendering="auto" fill="none" stroke-linecap="round"><path d="M2.2 7.2L4.6 1.2L6 7L8.4 1.2" transform="translate(1,1)" stroke="#fbfbfb" stroke-width="2.2"/><path d="M1.6 7L4.2 1L5.6 7L8.2 1" stroke="#949494" stroke-width="2.3"/><path d="M1.6 7L4.2 1L5.6 7L8.2 1" stroke="#b4b4b4" stroke-width="0.7"/></g></svg><svg class="ic" style="left:312px;top:60px" width="15" height="15" viewBox="0 0 15 15" shape-rendering="crispEdges"><rect x="11" y="4" width="4" height="1" fill="#fbfbfb"/><rect x="10" y="3" width="4" height="1" fill="#949494"/><rect x="11" y="6" width="4" height="1" fill="#fbfbfb"/><rect x="10" y="5" width="4" height="1" fill="#949494"/><rect x="11" y="8" width="4" height="1" fill="#fbfbfb"/><rect x="10" y="7" width="4" height="1" fill="#949494"/><rect x="1" y="10" width="14" height="1" fill="#fbfbfb"/><rect x="0" y="9" width="14" height="1" fill="#949494"/><rect x="1" y="12" width="14" height="1" fill="#fbfbfb"/><rect x="0" y="11" width="14" height="1" fill="#949494"/><rect x="1" y="14" width="14" height="1" fill="#fbfbfb"/><rect x="0" y="13" width="14" height="1" fill="#949494"/></svg><svg class="ic" style="left:343px;top:61px" width="13" height="12" viewBox="0 0 13 12" shape-rendering="crispEdges"><path fill="#000" d="M0 0h8v1h-8zM0 1h1v1h-1zM7 1h2v1h-2zM0 2h1v1h-1zM6 2h2v1h-2zM9 2h1v1h-1zM0 3h1v1h-1zM8 3h2v1h-2zM0 4h1v1h-1zM9 4h1v1h-1zM0 5h1v1h-1zM9 5h1v1h-1zM0 6h1v1h-1zM0 7h1v1h-1zM6 7h1v1h-1zM9 7h1v1h-1zM0 8h1v1h-1zM5 8h1v1h-1zM7 8h1v1h-1zM9 8h1v1h-1zM0 9h1v1h-1zM5 9h3v1h-3zM9 9h2v1h-2zM0 10h1v1h-1zM5 10h1v1h-1zM7 10h1v1h-1zM9 10h1v1h-1zM11 10h1v1h-1zM0 11h4v1h-4zM5 11h1v1h-1zM7 11h1v1h-1zM9 11h2v1h-2z"/><path fill="#fff" d="M1 1h1v1h-1zM1 2h1v1h-1zM8 2h1v1h-1zM1 3h1v1h-1zM1 4h1v1h-1zM7 4h2v1h-2zM1 5h1v1h-1zM6 5h3v1h-3zM1 6h1v1h-1zM5 6h4v1h-4zM1 7h1v1h-1zM5 7h1v1h-1zM7 7h2v1h-2zM10 7h1v1h-1zM1 8h1v1h-1zM4 8h1v1h-1zM6 8h1v1h-1zM8 8h1v1h-1zM10 8h1v1h-1zM1 9h1v1h-1zM3 9h2v1h-2zM8 9h1v1h-1zM11 9h1v1h-1zM1 10h1v1h-1zM3 10h2v1h-2zM6 10h1v1h-1zM8 10h1v1h-1zM10 10h1v1h-1zM4 11h1v1h-1zM6 11h1v1h-1zM8 11h1v1h-1zM11 11h1v1h-1z"/><path fill="#bcbcec" d="M2 1h1v1h-1zM4 1h1v1h-1zM6 1h1v1h-1zM3 2h1v1h-1zM5 2h1v1h-1zM2 3h1v1h-1zM4 3h1v1h-1zM6 3h1v1h-1zM3 4h1v1h-1zM5 4h1v1h-1zM2 5h1v1h-1zM4 5h1v1h-1zM3 6h1v1h-1zM2 7h1v1h-1zM4 7h1v1h-1zM3 8h1v1h-1zM2 9h1v1h-1z"/><path fill="#e8e8ff" d="M3 1h1v1h-1zM5 1h1v1h-1zM2 2h1v1h-1zM4 2h1v1h-1zM3 3h1v1h-1zM5 3h1v1h-1zM7 3h1v1h-1zM2 4h1v1h-1zM4 4h1v1h-1zM6 4h1v1h-1zM3 5h1v1h-1zM5 5h1v1h-1zM2 6h1v1h-1zM4 6h1v1h-1zM3 7h1v1h-1zM2 8h1v1h-1zM2 10h1v1h-1z"/></svg><svg class="ic" style="left:364px;top:60px" width="13" height="13" viewBox="0 0 13 13" shape-rendering="crispEdges"><rect x="2" y="-1" width="11" height="8" fill="#fbfbfb"/><rect x="-1" y="3" width="11" height="8" fill="#fbfbfb"/><rect x="3" y="6" width="11" height="8" fill="#fbfbfb"/><rect x="3" y="0" width="9" height="6" fill="#000"/><rect x="4" y="1" width="7" height="4" fill="#d4d0ff"/><rect x="4" y="1" width="7" height="1" fill="#000"/><rect x="5" y="3" width="4" height="1" fill="#fff"/><rect x="0" y="4" width="9" height="6" fill="#000"/><rect x="1" y="5" width="7" height="4" fill="#d4d0ff"/><rect x="1" y="5" width="7" height="1" fill="#402060"/><rect x="2" y="7" width="4" height="1" fill="#fff"/><rect x="4" y="7" width="9" height="6" fill="#000"/><rect x="5" y="8" width="7" height="4" fill="#d4d0ff"/><rect x="5" y="8" width="7" height="1" fill="#000080"/><rect x="6" y="10" width="4" height="1" fill="#fff"/></svg><svg class="ic" style="left:388px;top:60px" width="11" height="13" viewBox="0 0 11 13" shape-rendering="crispEdges"><rect x="-1" y="0" width="13" height="14" fill="#fbfbfb"/><rect x="4" y="0" width="3" height="1" fill="#303030"/><rect x="0" y="1" width="11" height="3" fill="#303030"/><rect x="1" y="2" width="9" height="1" fill="#b0b0b0"/><rect x="1" y="4" width="9" height="9" fill="#303030"/><rect x="2" y="5" width="7" height="7" fill="#e8e8e8"/><rect x="3" y="5" width="1" height="7" fill="#808080"/><rect x="5" y="5" width="1" height="7" fill="#707070"/><rect x="7" y="5" width="1" height="7" fill="#404040"/></svg><svg class="ic" style="left:486px;top:61px" width="16" height="13" viewBox="0 0 16 13" shape-rendering="crispEdges"><g shape-rendering="auto"><path d="M-0.6 4.6L4 2.5L7 -0.6L11 -0.6L15.8 1L16 10L10 13.2L-0.6 10.4z" fill="#fbfbfb"/><path d="M0 5.2L4.5 4.2L10 6.5L10 12.4L5.5 11.3L0 9.6z" fill="#8a8a8a"/><path d="M0 5.2L0 9.6" stroke="#6a6a6a" stroke-width="1"/><path d="M10 6.5L15 3.8L15 9L10 12.4z" fill="#1c2572"/><path d="M4 5.6L7 0.5L10 0.5L14.4 1.8L13 5.2L10 6.6z" fill="#fff" stroke="#808080" stroke-width="0.8"/><path d="M4.8 4.4L12.6 4.4L11.6 5.9L10 6.6L4.4 5.6z" fill="#f0e27e"/><rect x="6.8" y="7.8" width="1.5" height="1.5" fill="#20e020"/></g></svg><div style="left:196px;top:81px;width:1px;height:353px;background:#828790"></div><div style="left:197px;top:81px;width:16px;height:51px;background:#e8e8e4"></div><div style="left:213px;top:81px;width:1px;height:51px;background:#c8c8c8"></div><div style="left:214px;top:115px;width:424px;height:17px;background:#e8e8ff"></div><div style="left:196px;top:434px;width:442px;height:1px;background:#828790"></div><div style="left:195px;top:435px;width:443px;height:25px;background:#f0f0f0"></div><div style="left:195px;top:435px;width:1px;height:25px;background:#fff"></div><div class="mono" style="left:217.8px;top:82.5px;height:17px;line-height:17px">edit_control1 = <span style="color:#ff8000">"hello world"</span> &amp; 42</div><div class="mono" style="left:217.8px;top:99.5px;height:17px;line-height:17px">edit_control1.SetFocus()</div><div class="t" style="left:311.80px;top:441px;letter-spacing:-0.116px;color:#ff0000">Operand cannot appear as new assignment</div><div style="left:645px;top:26px;width:151px;height:1px;background:#5f5f5f"></div><div style="left:645px;top:27px;width:151px;height:1px;background:#6b6b6b"></div><div style="left:645px;top:26px;width:1px;height:437px;background:#5f5f5f"></div><div style="left:646px;top:28px;width:148px;height:434px;box-sizing:border-box;border:1px solid #828790;background:#fff"></div><svg class="ic" style="left:647px;top:31px" width="16" height="13" viewBox="0 0 16 13" shape-rendering="crispEdges"><path fill="#007a00" d="M3 0h5v1h-5zM2 1h1v1h-1zM8 1h1v1h-1zM1 2h1v1h-1zM9 2h6v1h-6zM1 3h1v1h-1zM14 3h1v1h-1zM1 4h1v1h-1zM14 4h1v1h-1zM0 5h11v1h-11zM14 5h1v1h-1zM0 6h1v1h-1zM11 6h1v1h-1zM14 6h1v1h-1zM1 7h1v1h-1zM12 7h1v1h-1zM14 7h1v1h-1zM1 8h1v1h-1zM12 8h1v1h-1zM14 8h1v1h-1zM2 9h1v1h-1zM13 9h2v1h-2zM2 10h1v1h-1zM13 10h2v1h-2zM3 11h12v1h-12z"/><path fill="#ffffff" d="M3 1h5v1h-5zM2 2h1v1h-1zM8 2h1v1h-1zM2 3h1v1h-1zM9 3h5v1h-5zM2 4h1v1h-1zM1 6h10v1h-10zM2 7h1v1h-1zM2 8h1v1h-1zM3 9h1v1h-1zM3 10h1v1h-1z"/><path fill="#00c400" d="M3 2h1v1h-1zM5 2h1v1h-1zM7 2h1v1h-1zM4 3h1v1h-1zM6 3h1v1h-1zM8 3h1v1h-1zM3 4h1v1h-1zM5 4h1v1h-1zM7 4h1v1h-1zM9 4h1v1h-1zM11 4h1v1h-1zM13 4h1v1h-1zM12 5h1v1h-1zM13 6h1v1h-1zM4 7h1v1h-1zM6 7h1v1h-1zM8 7h1v1h-1zM10 7h1v1h-1zM3 8h1v1h-1zM5 8h1v1h-1zM7 8h1v1h-1zM9 8h1v1h-1zM11 8h1v1h-1zM13 8h1v1h-1zM4 9h1v1h-1zM6 9h1v1h-1zM8 9h1v1h-1zM10 9h1v1h-1zM12 9h1v1h-1zM5 10h1v1h-1zM7 10h1v1h-1zM9 10h1v1h-1zM11 10h1v1h-1z"/><path fill="#3ddc3d" d="M4 2h1v1h-1zM6 2h1v1h-1zM3 3h1v1h-1zM5 3h1v1h-1zM7 3h1v1h-1zM4 4h1v1h-1zM6 4h1v1h-1zM8 4h1v1h-1zM10 4h1v1h-1zM12 4h1v1h-1zM11 5h1v1h-1zM13 5h1v1h-1zM12 6h1v1h-1zM3 7h1v1h-1zM5 7h1v1h-1zM7 7h1v1h-1zM9 7h1v1h-1zM11 7h1v1h-1zM4 8h1v1h-1zM6 8h1v1h-1zM8 8h1v1h-1zM10 8h1v1h-1zM5 9h1v1h-1zM7 9h1v1h-1zM9 9h1v1h-1zM11 9h1v1h-1zM4 10h1v1h-1zM6 10h1v1h-1zM8 10h1v1h-1zM10 10h1v1h-1zM12 10h1v1h-1z"/><path fill="#000000" d="M15 3h1v1h-1zM15 4h1v1h-1zM15 5h1v1h-1zM15 6h1v1h-1zM13 7h1v1h-1zM15 7h1v1h-1zM15 8h1v1h-1zM15 9h1v1h-1zM15 10h1v1h-1zM15 11h1v1h-1zM4 12h12v1h-12z"/></svg><div class="t" style="left:665.80px;top:31px;letter-spacing:-0.292px;">Expressions</div><div style="left:655px;top:45px;width:1px;height:57px;background:repeating-linear-gradient(#808080 0,#808080 1px,transparent 1px,transparent 2px)"></div><div style="left:656px;top:53px;width:10px;height:1px;background:repeating-linear-gradient(90deg,#808080 0,#808080 1px,transparent 1px,transparent 2px)"></div><svg class="ic" style="left:666px;top:47px" width="20" height="12" viewBox="0 0 20 12" shape-rendering="crispEdges"><path fill="#000" d="M0 0h20v1h-20zM0 1h1v1h-1zM12 1h2v1h-2zM19 1h1v1h-1zM0 2h1v1h-1zM12 2h2v1h-2zM16 2h1v1h-1zM19 2h1v1h-1zM0 3h1v1h-1zM3 3h6v1h-6zM12 3h2v1h-2zM15 3h3v1h-3zM19 3h1v1h-1zM0 4h1v1h-1zM12 4h2v1h-2zM19 4h1v1h-1zM0 5h1v1h-1zM12 5h2v1h-2zM19 5h1v1h-1zM0 6h1v1h-1zM3 6h8v1h-8zM12 6h8v1h-8zM0 7h1v1h-1zM12 7h2v1h-2zM19 7h1v1h-1zM0 8h1v1h-1zM12 8h2v1h-2zM15 8h3v1h-3zM19 8h1v1h-1zM0 9h1v1h-1zM3 9h7v1h-7zM12 9h2v1h-2zM16 9h1v1h-1zM19 9h1v1h-1zM0 10h1v1h-1zM12 10h2v1h-2zM19 10h1v1h-1zM0 11h20v1h-20z"/><path fill="#fff" d="M1 1h11v1h-11zM14 1h5v1h-5zM1 2h11v1h-11zM1 3h2v1h-2zM9 3h3v1h-3zM1 4h11v1h-11zM1 5h11v1h-11zM1 6h2v1h-2zM11 6h1v1h-1zM1 7h11v1h-11zM14 7h5v1h-5zM1 8h11v1h-11zM1 9h2v1h-2zM10 9h2v1h-2zM1 10h11v1h-11z"/><path fill="#c0c0c0" d="M14 2h2v1h-2zM17 2h2v1h-2zM14 3h1v1h-1zM18 3h1v1h-1zM14 4h5v1h-5zM14 5h5v1h-5zM14 8h1v1h-1zM18 8h1v1h-1zM14 9h2v1h-2zM17 9h2v1h-2zM14 10h5v1h-5z"/></svg><div class="t" style="left:689.30px;top:47px;letter-spacing:-0.055px;">button1_Click</div><div style="left:656px;top:69px;width:10px;height:1px;background:repeating-linear-gradient(90deg,#808080 0,#808080 1px,transparent 1px,transparent 2px)"></div><svg class="ic" style="left:666px;top:63px" width="20" height="12" viewBox="0 0 20 12" shape-rendering="crispEdges"><path fill="#000" d="M0 0h20v1h-20zM0 1h1v1h-1zM12 1h2v1h-2zM19 1h1v1h-1zM0 2h1v1h-1zM12 2h2v1h-2zM16 2h1v1h-1zM19 2h1v1h-1zM0 3h1v1h-1zM3 3h6v1h-6zM12 3h2v1h-2zM15 3h3v1h-3zM19 3h1v1h-1zM0 4h1v1h-1zM12 4h2v1h-2zM19 4h1v1h-1zM0 5h1v1h-1zM12 5h2v1h-2zM19 5h1v1h-1zM0 6h1v1h-1zM3 6h8v1h-8zM12 6h8v1h-8zM0 7h1v1h-1zM12 7h2v1h-2zM19 7h1v1h-1zM0 8h1v1h-1zM12 8h2v1h-2zM15 8h3v1h-3zM19 8h1v1h-1zM0 9h1v1h-1zM3 9h7v1h-7zM12 9h2v1h-2zM16 9h1v1h-1zM19 9h1v1h-1zM0 10h1v1h-1zM12 10h2v1h-2zM19 10h1v1h-1zM0 11h20v1h-20z"/><path fill="#fff" d="M1 1h11v1h-11zM14 1h5v1h-5zM1 2h11v1h-11zM1 3h2v1h-2zM9 3h3v1h-3zM1 4h11v1h-11zM1 5h11v1h-11zM1 6h2v1h-2zM11 6h1v1h-1zM1 7h11v1h-11zM14 7h5v1h-5zM1 8h11v1h-11zM1 9h2v1h-2zM10 9h2v1h-2zM1 10h11v1h-11z"/><path fill="#c0c0c0" d="M14 2h2v1h-2zM17 2h2v1h-2zM14 3h1v1h-1zM18 3h1v1h-1zM14 4h5v1h-5zM14 5h5v1h-5zM14 8h1v1h-1zM18 8h1v1h-1zM14 9h2v1h-2zM17 9h2v1h-2zM14 10h5v1h-5z"/></svg><div class="t" style="left:689.30px;top:63px;letter-spacing:0.367px;">expr1</div><div style="left:656px;top:85px;width:10px;height:1px;background:repeating-linear-gradient(90deg,#808080 0,#808080 1px,transparent 1px,transparent 2px)"></div><svg class="ic" style="left:666px;top:79px" width="20" height="12" viewBox="0 0 20 12" shape-rendering="crispEdges"><path fill="#000" d="M0 0h20v1h-20zM0 1h1v1h-1zM12 1h2v1h-2zM19 1h1v1h-1zM0 2h1v1h-1zM12 2h2v1h-2zM16 2h1v1h-1zM19 2h1v1h-1zM0 3h1v1h-1zM3 3h6v1h-6zM12 3h2v1h-2zM15 3h3v1h-3zM19 3h1v1h-1zM0 4h1v1h-1zM12 4h2v1h-2zM19 4h1v1h-1zM0 5h1v1h-1zM12 5h2v1h-2zM19 5h1v1h-1zM0 6h1v1h-1zM3 6h8v1h-8zM12 6h8v1h-8zM0 7h1v1h-1zM12 7h2v1h-2zM19 7h1v1h-1zM0 8h1v1h-1zM12 8h2v1h-2zM15 8h3v1h-3zM19 8h1v1h-1zM0 9h1v1h-1zM3 9h7v1h-7zM12 9h2v1h-2zM16 9h1v1h-1zM19 9h1v1h-1zM0 10h1v1h-1zM12 10h2v1h-2zM19 10h1v1h-1zM0 11h20v1h-20z"/><path fill="#fff" d="M1 1h11v1h-11zM14 1h5v1h-5zM1 2h11v1h-11zM1 3h2v1h-2zM9 3h3v1h-3zM1 4h11v1h-11zM1 5h11v1h-11zM1 6h2v1h-2zM11 6h1v1h-1zM1 7h11v1h-11zM14 7h5v1h-5zM1 8h11v1h-11zM1 9h2v1h-2zM10 9h2v1h-2zM1 10h11v1h-11z"/><path fill="#c0c0c0" d="M14 2h2v1h-2zM17 2h2v1h-2zM14 3h1v1h-1zM18 3h1v1h-1zM14 4h5v1h-5zM14 5h5v1h-5zM14 8h1v1h-1zM18 8h1v1h-1zM14 9h2v1h-2zM17 9h2v1h-2zM14 10h5v1h-5z"/></svg><div class="t" style="left:689.30px;top:79px;letter-spacing:0.367px;">expr2</div><div style="left:656px;top:101px;width:10px;height:1px;background:repeating-linear-gradient(90deg,#808080 0,#808080 1px,transparent 1px,transparent 2px)"></div><svg class="ic" style="left:666px;top:95px" width="20" height="12" viewBox="0 0 20 12" shape-rendering="crispEdges"><path fill="#000" d="M0 0h20v1h-20zM0 1h1v1h-1zM12 1h2v1h-2zM19 1h1v1h-1zM0 2h1v1h-1zM12 2h2v1h-2zM16 2h1v1h-1zM19 2h1v1h-1zM0 3h1v1h-1zM3 3h6v1h-6zM12 3h2v1h-2zM15 3h3v1h-3zM19 3h1v1h-1zM0 4h1v1h-1zM12 4h2v1h-2zM19 4h1v1h-1zM0 5h1v1h-1zM12 5h2v1h-2zM19 5h1v1h-1zM0 6h1v1h-1zM3 6h8v1h-8zM12 6h8v1h-8zM0 7h1v1h-1zM12 7h2v1h-2zM19 7h1v1h-1zM0 8h1v1h-1zM12 8h2v1h-2zM15 8h3v1h-3zM19 8h1v1h-1zM0 9h1v1h-1zM3 9h7v1h-7zM12 9h2v1h-2zM16 9h1v1h-1zM19 9h1v1h-1zM0 10h1v1h-1zM12 10h2v1h-2zM19 10h1v1h-1zM0 11h20v1h-20z"/><path fill="#fff" d="M1 1h11v1h-11zM14 1h5v1h-5zM1 2h11v1h-11zM1 3h2v1h-2zM9 3h3v1h-3zM1 4h11v1h-11zM1 5h11v1h-11zM1 6h2v1h-2zM11 6h1v1h-1zM1 7h11v1h-11zM14 7h5v1h-5zM1 8h11v1h-11zM1 9h2v1h-2zM10 9h2v1h-2zM1 10h11v1h-11z"/><path fill="#c0c0c0" d="M14 2h2v1h-2zM17 2h2v1h-2zM14 3h1v1h-1zM18 3h1v1h-1zM14 4h5v1h-5zM14 5h5v1h-5zM14 8h1v1h-1zM18 8h1v1h-1zM14 9h2v1h-2zM17 9h2v1h-2zM14 10h5v1h-5z"/></svg><div style="left:689px;top:93px;width:47px;height:16px;background:#3399ff"></div><div class="t" style="left:689.30px;top:95px;letter-spacing:0.099px;color:#fff">exprNew</div><div style="left:2px;top:462px;width:794px;height:2px;background:#fff"></div><div style="left:2px;top:464px;width:794px;height:32px;background:#f0f0f0"></div><div style="left:7px;top:466px;width:2px;height:2px;background:#b4b4b4"></div><div style="left:8px;top:466px;width:1px;height:1px;background:#a0a0a0"></div><div style="left:7px;top:467px;width:1px;height:1px;background:#fff"></div><div style="left:7px;top:470px;width:2px;height:2px;background:#b4b4b4"></div><div style="left:8px;top:470px;width:1px;height:1px;background:#a0a0a0"></div><div style="left:7px;top:471px;width:1px;height:1px;background:#fff"></div><div style="left:7px;top:474px;width:2px;height:2px;background:#b4b4b4"></div><div style="left:8px;top:474px;width:1px;height:1px;background:#a0a0a0"></div><div style="left:7px;top:475px;width:1px;height:1px;background:#fff"></div><div style="left:7px;top:478px;width:2px;height:2px;background:#b4b4b4"></div><div style="left:8px;top:478px;width:1px;height:1px;background:#a0a0a0"></div><div style="left:7px;top:479px;width:1px;height:1px;background:#fff"></div><div style="left:7px;top:482px;width:2px;height:2px;background:#b4b4b4"></div><div style="left:8px;top:482px;width:1px;height:1px;background:#a0a0a0"></div><div style="left:7px;top:483px;width:1px;height:1px;background:#fff"></div><div style="left:7px;top:486px;width:2px;height:2px;background:#b4b4b4"></div><div style="left:8px;top:486px;width:1px;height:1px;background:#a0a0a0"></div><div style="left:7px;top:487px;width:1px;height:1px;background:#fff"></div><div style="left:7px;top:490px;width:2px;height:2px;background:#b4b4b4"></div><div style="left:8px;top:490px;width:1px;height:1px;background:#a0a0a0"></div><div style="left:7px;top:491px;width:1px;height:1px;background:#fff"></div><div style="left:7px;top:494px;width:2px;height:2px;background:#b4b4b4"></div><div style="left:8px;top:494px;width:1px;height:1px;background:#a0a0a0"></div><div style="left:7px;top:495px;width:1px;height:1px;background:#fff"></div><div style="left:15px;top:465px;width:29px;height:29px;box-sizing:border-box;border:1px solid #666;background:#999;box-shadow:inset 1px 1px 0 #dadada"></div><div class="t" style="left:24.17px;top:474px;transform:scaleX(1.1388);transform-origin:0 0;">IF</div><div style="left:45px;top:465px;width:29px;height:29px;box-sizing:border-box;border:1px solid #666;background:#999;box-shadow:inset 1px 1px 0 #dadada"></div><div class="t" style="left:47.83px;top:474px;transform:scaleX(0.8474);transform-origin:0 0;">ELSE</div><div style="left:75px;top:465px;width:29px;height:29px;box-sizing:border-box;border:1px solid #666;background:#999;box-shadow:inset 1px 1px 0 #dadada"></div><div class="t" style="left:85.78px;top:473px;transform:scaleX(1.0917);transform-origin:0 0;font-size:13px;">=</div><div style="left:105px;top:465px;width:29px;height:29px;box-sizing:border-box;border:1px solid #666;background:#999;box-shadow:inset 1px 1px 0 #dadada"></div><div class="t" style="left:105px;width:29px;text-align:center;top:475px;font-size:14px">//</div><div style="left:135px;top:465px;width:39px;height:29px;box-sizing:border-box;border:1px solid #666;background:#999;box-shadow:inset 1px 1px 0 #dadada"></div><div class="t" style="left:138.55px;top:474px;letter-spacing:-0.648px;">WHILE</div><div style="left:175px;top:465px;width:34px;height:29px;box-sizing:border-box;border:1px solid #666;background:#999;box-shadow:inset 1px 1px 0 #dadada"></div><div class="t" style="left:179.33px;top:474px;transform:scaleX(0.8594);transform-origin:0 0;">CALL</div><div style="left:210px;top:465px;width:29px;height:29px;box-sizing:border-box;border:1px solid #666;background:#999;box-shadow:inset 1px 1px 0 #dadada"></div><div class="t" style="left:213.53px;top:474px;transform:scaleX(0.8656);transform-origin:0 0;">EXIT</div><div style="left:246px;top:465px;width:29px;height:29px;box-sizing:border-box;border:1px solid #666;background:#999;box-shadow:inset 1px 1px 0 #dadada"></div><div class="t" style="left:246px;width:29px;text-align:center;top:473px;font-size:13px">(</div><div style="left:276px;top:465px;width:29px;height:29px;box-sizing:border-box;border:1px solid #666;background:#999;box-shadow:inset 1px 1px 0 #dadada"></div><div class="t" style="left:276px;width:29px;text-align:center;top:473px;font-size:13px">)</div><div style="left:312px;top:465px;width:29px;height:29px;box-sizing:border-box;border:1px solid #666;background:#999;box-shadow:inset 1px 1px 0 #dadada"></div><div class="t" style="left:323.54px;top:473px;transform:scaleX(1.0527);transform-origin:0 0;font-size:13px;">+</div><div style="left:342px;top:465px;width:29px;height:29px;box-sizing:border-box;border:1px solid #666;background:#999;box-shadow:inset 1px 1px 0 #dadada"></div><div class="t" style="left:342px;width:29px;text-align:center;top:473px;font-size:13px">-</div><div style="left:372px;top:465px;width:29px;height:29px;box-sizing:border-box;border:1px solid #666;background:#999;box-shadow:inset 1px 1px 0 #dadada"></div><div class="t" style="left:372px;width:29px;text-align:center;top:472px;font-size:13px">*</div><div style="left:402px;top:465px;width:29px;height:29px;box-sizing:border-box;border:1px solid #666;background:#999;box-shadow:inset 1px 1px 0 #dadada"></div><div class="t" style="left:402px;width:29px;text-align:center;top:475px;font-size:14px">/</div><div style="left:438px;top:465px;width:29px;height:29px;box-sizing:border-box;border:1px solid #666;background:#999;box-shadow:inset 1px 1px 0 #dadada"></div><div class="t" style="left:442.82px;top:474px;transform:scaleX(0.8995);transform-origin:0 0;">AND</div><div style="left:468px;top:465px;width:29px;height:29px;box-sizing:border-box;border:1px solid #666;background:#999;box-shadow:inset 1px 1px 0 #dadada"></div><div class="t" style="left:475.57px;top:474px;transform:scaleX(0.8871);transform-origin:0 0;">OR</div><div style="left:504px;top:465px;width:29px;height:29px;box-sizing:border-box;border:1px solid #666;background:#999;box-shadow:inset 1px 1px 0 #dadada"></div><div class="t" style="left:515.28px;top:473px;transform:scaleX(1.0917);transform-origin:0 0;font-size:13px;">&lt;</div><div style="left:534px;top:465px;width:29px;height:29px;box-sizing:border-box;border:1px solid #666;background:#999;box-shadow:inset 1px 1px 0 #dadada"></div><div class="t" style="left:541.05px;top:473px;letter-spacing:0.812px;font-size:13px;">&lt;=</div><div style="left:564px;top:465px;width:29px;height:29px;box-sizing:border-box;border:1px solid #666;background:#999;box-shadow:inset 1px 1px 0 #dadada"></div><div class="t" style="left:571.80px;top:473px;letter-spacing:0.062px;font-size:13px;">==</div><div style="left:594px;top:465px;width:29px;height:29px;box-sizing:border-box;border:1px solid #666;background:#999;box-shadow:inset 1px 1px 0 #dadada"></div><div class="t" style="left:601.80px;top:473px;letter-spacing:0.062px;font-size:13px;">&lt;&gt;</div><div style="left:624px;top:465px;width:29px;height:29px;box-sizing:border-box;border:1px solid #666;background:#999;box-shadow:inset 1px 1px 0 #dadada"></div><div class="t" style="left:631.80px;top:473px;letter-spacing:0.062px;font-size:13px;">&gt;=</div><div style="left:654px;top:465px;width:29px;height:29px;box-sizing:border-box;border:1px solid #666;background:#999;box-shadow:inset 1px 1px 0 #dadada"></div><div class="t" style="left:665.28px;top:473px;transform:scaleX(1.0917);transform-origin:0 0;font-size:13px;">&gt;</div><div style="left:690px;top:465px;width:29px;height:29px;box-sizing:border-box;border:1px solid #666;background:#999;box-shadow:inset 1px 1px 0 #dadada"></div><div class="t" style="left:701.76px;top:474px;transform:scaleX(1.1823);transform-origin:0 0;">&amp;</div><div style="left:242px;top:466px;width:1px;height:27px;background:#a0a0a0"></div><div style="left:243px;top:466px;width:1px;height:27px;background:#fff"></div><div style="left:308px;top:466px;width:1px;height:27px;background:#a0a0a0"></div><div style="left:309px;top:466px;width:1px;height:27px;background:#fff"></div><div style="left:434px;top:466px;width:1px;height:27px;background:#a0a0a0"></div><div style="left:435px;top:466px;width:1px;height:27px;background:#fff"></div><div style="left:500px;top:466px;width:1px;height:27px;background:#a0a0a0"></div><div style="left:501px;top:466px;width:1px;height:27px;background:#fff"></div><div style="left:686px;top:466px;width:1px;height:27px;background:#a0a0a0"></div><div style="left:687px;top:466px;width:1px;height:27px;background:#fff"></div>
</body></html>
